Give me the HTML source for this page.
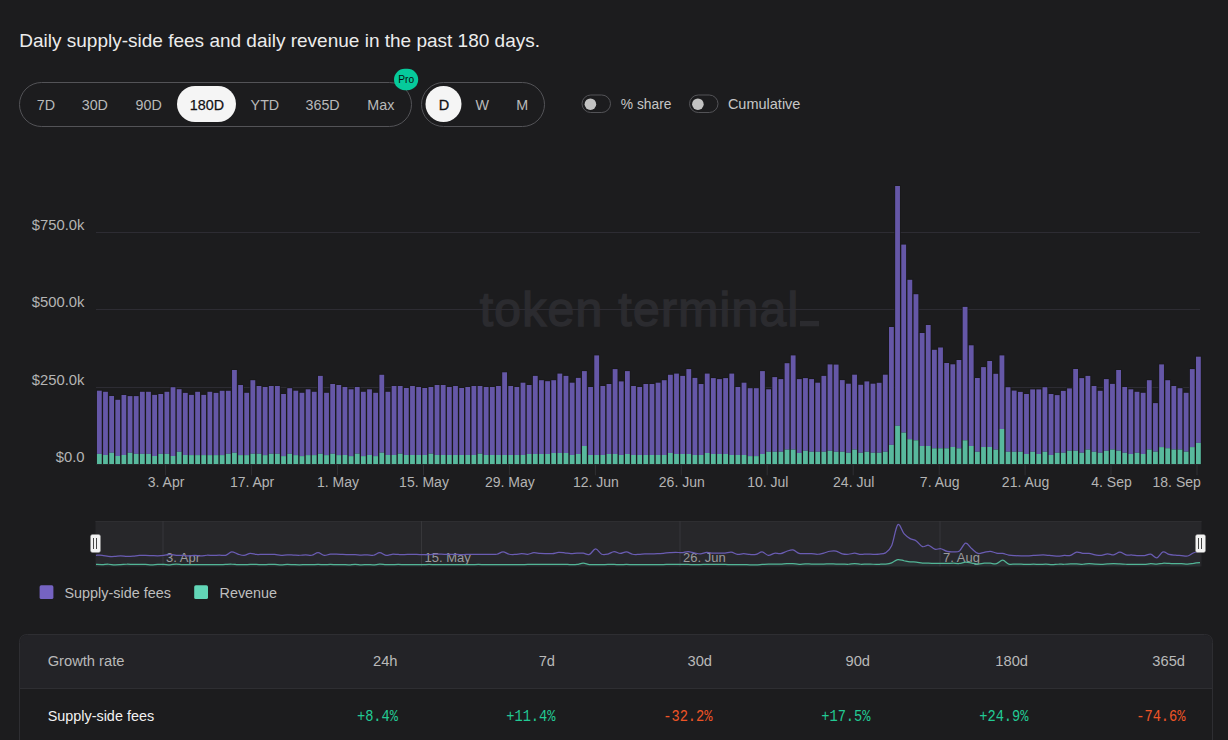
<!DOCTYPE html>
<html><head><meta charset="utf-8"><title>chart</title>
<style>html,body{margin:0;padding:0;background:#1c1c1e;width:1228px;height:740px;overflow:hidden}svg{display:block}</style>
</head><body>
<svg width="1228" height="740" viewBox="0 0 1228 740">
<rect width="1228" height="740" fill="#1c1c1e"/>
<text x="19.3" y="47" font-size="19" fill="#ececec" text-anchor="start" font-weight="normal" font-family='"Liberation Sans", sans-serif' >Daily supply-side fees and daily revenue in the past 180 days.</text>
<rect x="19.5" y="82.5" width="392" height="44" rx="22" fill="none" stroke="#535357"/>
<rect x="177" y="86" width="59" height="36" rx="18" fill="#f5f5f5"/>
<text x="36.7" y="110" font-size="14.3" fill="#b9b9b9" text-anchor="start" font-weight="normal" font-family='"Liberation Sans", sans-serif' >7D</text>
<text x="81.7" y="110" font-size="14.3" fill="#b9b9b9" text-anchor="start" font-weight="normal" font-family='"Liberation Sans", sans-serif' >30D</text>
<text x="135.6" y="110" font-size="14.3" fill="#b9b9b9" text-anchor="start" font-weight="normal" font-family='"Liberation Sans", sans-serif' >90D</text>
<text x="250.6" y="110" font-size="14.3" fill="#b9b9b9" text-anchor="start" font-weight="normal" font-family='"Liberation Sans", sans-serif' >YTD</text>
<text x="305.5" y="110" font-size="14.3" fill="#b9b9b9" text-anchor="start" font-weight="normal" font-family='"Liberation Sans", sans-serif' >365D</text>
<text x="367.3" y="110" font-size="14.3" fill="#b9b9b9" text-anchor="start" font-weight="normal" font-family='"Liberation Sans", sans-serif' >Max</text>
<text x="189.8" y="110" font-size="14.3" fill="#111113" text-anchor="start" font-weight="normal" font-family='"Liberation Sans", sans-serif' stroke="#111113" stroke-width="0.25">180D</text>
<rect x="394" y="68.8" width="24.2" height="21.4" rx="10.7" fill="#06ca9b"/>
<text x="406.2" y="83.1" font-size="10.2" fill="#07120e" text-anchor="middle" font-weight="normal" font-family='"Liberation Sans", sans-serif' >Pro</text>
<rect x="421.5" y="82.5" width="123" height="44" rx="22" fill="none" stroke="#535357"/>
<circle cx="443.5" cy="104" r="18" fill="#f5f5f5"/>
<text x="443.9" y="110" font-size="14.5" fill="#111113" text-anchor="middle" font-weight="normal" font-family='"Liberation Sans", sans-serif' stroke="#111113" stroke-width="0.3">D</text>
<text x="482.3" y="110" font-size="14.3" fill="#b9b9b9" text-anchor="middle" font-weight="normal" font-family='"Liberation Sans", sans-serif' >W</text>
<text x="522.1" y="110" font-size="14.3" fill="#b9b9b9" text-anchor="middle" font-weight="normal" font-family='"Liberation Sans", sans-serif' >M</text>
<rect x="582" y="95" width="28.5" height="17.5" rx="8.75" fill="none" stroke="#535357"/>
<circle cx="590.4" cy="104.2" r="5.8" fill="#c2c2c2"/>
<text x="620.8" y="109" font-size="13.8" fill="#c6c6c6" text-anchor="start" font-weight="normal" font-family='"Liberation Sans", sans-serif' >% share</text>
<rect x="689.5" y="95" width="28.5" height="17.5" rx="8.75" fill="none" stroke="#535357"/>
<circle cx="697.9" cy="104.2" r="5.8" fill="#c2c2c2"/>
<text x="727.9" y="109" font-size="14.5" fill="#c6c6c6" text-anchor="start" font-weight="normal" font-family='"Liberation Sans", sans-serif' >Cumulative</text>
<text x="479.7" y="325.6" font-size="48" fill="#2b2b2f" text-anchor="start" font-weight="normal" font-family='"Liberation Sans", sans-serif' stroke="#2b2b2f" stroke-width="1.5" letter-spacing="1.3">token terminal</text>
<rect x="800" y="321" width="19" height="5.3" fill="#2b2b2f"/>
<line x1="96" y1="232.5" x2="1200" y2="232.5" stroke="#2d2c33" stroke-width="1"/>
<line x1="96" y1="309.5" x2="1200" y2="309.5" stroke="#2d2c33" stroke-width="1"/>
<line x1="96" y1="387.5" x2="1200" y2="387.5" stroke="#2d2c33" stroke-width="1"/>
<text x="84.5" y="230" font-size="14.8" fill="#b4b4b4" text-anchor="end" font-weight="normal" font-family='"Liberation Sans", sans-serif' >$750.0k</text>
<text x="84.5" y="307" font-size="14.8" fill="#b4b4b4" text-anchor="end" font-weight="normal" font-family='"Liberation Sans", sans-serif' >$500.0k</text>
<text x="84.5" y="384.9" font-size="14.8" fill="#b4b4b4" text-anchor="end" font-weight="normal" font-family='"Liberation Sans", sans-serif' >$250.0k</text>
<text x="84.5" y="461.8" font-size="14.8" fill="#b4b4b4" text-anchor="end" font-weight="normal" font-family='"Liberation Sans", sans-serif' >$0.0</text>
<rect x="96.15" y="389.7" width="6.40" height="74.4" fill="#19191b"/>
<rect x="96.95" y="390.7" width="4.8" height="63.2" fill="#6557a7"/>
<rect x="96.95" y="453.9" width="4.8" height="10.2" fill="#58b99d"/>
<rect x="102.29" y="390.8" width="6.40" height="73.3" fill="#19191b"/>
<rect x="103.09" y="391.8" width="4.8" height="63.2" fill="#6557a7"/>
<rect x="103.09" y="455.0" width="4.8" height="9.1" fill="#58b99d"/>
<rect x="108.43" y="395.0" width="6.40" height="69.1" fill="#19191b"/>
<rect x="109.23" y="396.0" width="4.8" height="56.8" fill="#6557a7"/>
<rect x="109.23" y="452.8" width="4.8" height="11.3" fill="#58b99d"/>
<rect x="114.57" y="398.8" width="6.40" height="65.3" fill="#19191b"/>
<rect x="115.37" y="399.8" width="4.8" height="56.2" fill="#6557a7"/>
<rect x="115.37" y="456.0" width="4.8" height="8.1" fill="#58b99d"/>
<rect x="120.71" y="394.0" width="6.40" height="70.1" fill="#19191b"/>
<rect x="121.51" y="395.0" width="4.8" height="60.0" fill="#6557a7"/>
<rect x="121.51" y="455.0" width="4.8" height="9.1" fill="#58b99d"/>
<rect x="126.85" y="395.1" width="6.40" height="69.0" fill="#19191b"/>
<rect x="127.65" y="396.1" width="4.8" height="56.7" fill="#6557a7"/>
<rect x="127.65" y="452.8" width="4.8" height="11.3" fill="#58b99d"/>
<rect x="132.99" y="395.1" width="6.40" height="69.0" fill="#19191b"/>
<rect x="133.79" y="396.1" width="4.8" height="57.8" fill="#6557a7"/>
<rect x="133.79" y="453.9" width="4.8" height="10.2" fill="#58b99d"/>
<rect x="139.13" y="390.8" width="6.40" height="73.3" fill="#19191b"/>
<rect x="139.93" y="391.8" width="4.8" height="62.1" fill="#6557a7"/>
<rect x="139.93" y="453.9" width="4.8" height="10.2" fill="#58b99d"/>
<rect x="145.27" y="390.8" width="6.40" height="73.3" fill="#19191b"/>
<rect x="146.07" y="391.8" width="4.8" height="62.1" fill="#6557a7"/>
<rect x="146.07" y="453.9" width="4.8" height="10.2" fill="#58b99d"/>
<rect x="151.41" y="393.9" width="6.40" height="70.2" fill="#19191b"/>
<rect x="152.21" y="394.9" width="4.8" height="61.1" fill="#6557a7"/>
<rect x="152.21" y="456.0" width="4.8" height="8.1" fill="#58b99d"/>
<rect x="157.55" y="393.0" width="6.40" height="71.1" fill="#19191b"/>
<rect x="158.35" y="394.0" width="4.8" height="59.9" fill="#6557a7"/>
<rect x="158.35" y="453.9" width="4.8" height="10.2" fill="#58b99d"/>
<rect x="163.69" y="390.8" width="6.40" height="73.3" fill="#19191b"/>
<rect x="164.49" y="391.8" width="4.8" height="62.1" fill="#6557a7"/>
<rect x="164.49" y="453.9" width="4.8" height="10.2" fill="#58b99d"/>
<rect x="169.83" y="386.2" width="6.40" height="77.9" fill="#19191b"/>
<rect x="170.63" y="387.2" width="4.8" height="68.8" fill="#6557a7"/>
<rect x="170.63" y="456.0" width="4.8" height="8.1" fill="#58b99d"/>
<rect x="175.97" y="388.2" width="6.40" height="75.9" fill="#19191b"/>
<rect x="176.77" y="389.2" width="4.8" height="62.6" fill="#6557a7"/>
<rect x="176.77" y="451.8" width="4.8" height="12.3" fill="#58b99d"/>
<rect x="182.11" y="391.9" width="6.40" height="72.2" fill="#19191b"/>
<rect x="182.91" y="392.9" width="4.8" height="62.1" fill="#6557a7"/>
<rect x="182.91" y="455.0" width="4.8" height="9.1" fill="#58b99d"/>
<rect x="188.25" y="393.9" width="6.40" height="70.2" fill="#19191b"/>
<rect x="189.05" y="394.9" width="4.8" height="60.2" fill="#6557a7"/>
<rect x="189.05" y="455.1" width="4.8" height="9.0" fill="#58b99d"/>
<rect x="194.39" y="390.8" width="6.40" height="73.3" fill="#19191b"/>
<rect x="195.19" y="391.8" width="4.8" height="63.3" fill="#6557a7"/>
<rect x="195.19" y="455.1" width="4.8" height="9.0" fill="#58b99d"/>
<rect x="200.53" y="393.9" width="6.40" height="70.2" fill="#19191b"/>
<rect x="201.33" y="394.9" width="4.8" height="60.2" fill="#6557a7"/>
<rect x="201.33" y="455.1" width="4.8" height="9.0" fill="#58b99d"/>
<rect x="206.67" y="390.8" width="6.40" height="73.3" fill="#19191b"/>
<rect x="207.47" y="391.8" width="4.8" height="63.3" fill="#6557a7"/>
<rect x="207.47" y="455.1" width="4.8" height="9.0" fill="#58b99d"/>
<rect x="212.81" y="391.9" width="6.40" height="72.2" fill="#19191b"/>
<rect x="213.61" y="392.9" width="4.8" height="62.2" fill="#6557a7"/>
<rect x="213.61" y="455.1" width="4.8" height="9.0" fill="#58b99d"/>
<rect x="218.95" y="389.8" width="6.40" height="74.3" fill="#19191b"/>
<rect x="219.75" y="390.8" width="4.8" height="64.3" fill="#6557a7"/>
<rect x="219.75" y="455.1" width="4.8" height="9.0" fill="#58b99d"/>
<rect x="225.09" y="389.8" width="6.40" height="74.3" fill="#19191b"/>
<rect x="225.89" y="390.8" width="4.8" height="63.0" fill="#6557a7"/>
<rect x="225.89" y="453.8" width="4.8" height="10.3" fill="#58b99d"/>
<rect x="231.23" y="369.0" width="6.40" height="95.1" fill="#19191b"/>
<rect x="232.03" y="370.0" width="4.8" height="82.8" fill="#6557a7"/>
<rect x="232.03" y="452.8" width="4.8" height="11.3" fill="#58b99d"/>
<rect x="237.37" y="384.0" width="6.40" height="80.1" fill="#19191b"/>
<rect x="238.17" y="385.0" width="4.8" height="70.1" fill="#6557a7"/>
<rect x="238.17" y="455.1" width="4.8" height="9.0" fill="#58b99d"/>
<rect x="243.51" y="391.8" width="6.40" height="72.3" fill="#19191b"/>
<rect x="244.31" y="392.8" width="4.8" height="62.3" fill="#6557a7"/>
<rect x="244.31" y="455.1" width="4.8" height="9.0" fill="#58b99d"/>
<rect x="249.65" y="379.2" width="6.40" height="84.9" fill="#19191b"/>
<rect x="250.45" y="380.2" width="4.8" height="73.6" fill="#6557a7"/>
<rect x="250.45" y="453.8" width="4.8" height="10.3" fill="#58b99d"/>
<rect x="255.79" y="385.0" width="6.40" height="79.1" fill="#19191b"/>
<rect x="256.59" y="386.0" width="4.8" height="67.8" fill="#6557a7"/>
<rect x="256.59" y="453.8" width="4.8" height="10.3" fill="#58b99d"/>
<rect x="261.93" y="386.0" width="6.40" height="78.1" fill="#19191b"/>
<rect x="262.73" y="387.0" width="4.8" height="68.1" fill="#6557a7"/>
<rect x="262.73" y="455.1" width="4.8" height="9.0" fill="#58b99d"/>
<rect x="268.07" y="385.0" width="6.40" height="79.1" fill="#19191b"/>
<rect x="268.87" y="386.0" width="4.8" height="67.8" fill="#6557a7"/>
<rect x="268.87" y="453.8" width="4.8" height="10.3" fill="#58b99d"/>
<rect x="274.21" y="385.0" width="6.40" height="79.1" fill="#19191b"/>
<rect x="275.01" y="386.0" width="4.8" height="67.8" fill="#6557a7"/>
<rect x="275.01" y="453.8" width="4.8" height="10.3" fill="#58b99d"/>
<rect x="280.35" y="393.0" width="6.40" height="71.1" fill="#19191b"/>
<rect x="281.15" y="394.0" width="4.8" height="62.1" fill="#6557a7"/>
<rect x="281.15" y="456.1" width="4.8" height="8.0" fill="#58b99d"/>
<rect x="286.49" y="387.2" width="6.40" height="76.9" fill="#19191b"/>
<rect x="287.29" y="388.2" width="4.8" height="65.6" fill="#6557a7"/>
<rect x="287.29" y="453.8" width="4.8" height="10.3" fill="#58b99d"/>
<rect x="292.63" y="389.7" width="6.40" height="74.4" fill="#19191b"/>
<rect x="293.43" y="390.7" width="4.8" height="64.4" fill="#6557a7"/>
<rect x="293.43" y="455.1" width="4.8" height="9.0" fill="#58b99d"/>
<rect x="298.77" y="391.8" width="6.40" height="72.3" fill="#19191b"/>
<rect x="299.57" y="392.8" width="4.8" height="63.3" fill="#6557a7"/>
<rect x="299.57" y="456.1" width="4.8" height="8.0" fill="#58b99d"/>
<rect x="304.91" y="388.3" width="6.40" height="75.8" fill="#19191b"/>
<rect x="305.71" y="389.3" width="4.8" height="65.8" fill="#6557a7"/>
<rect x="305.71" y="455.1" width="4.8" height="9.0" fill="#58b99d"/>
<rect x="311.05" y="390.8" width="6.40" height="73.3" fill="#19191b"/>
<rect x="311.85" y="391.8" width="4.8" height="63.3" fill="#6557a7"/>
<rect x="311.85" y="455.1" width="4.8" height="9.0" fill="#58b99d"/>
<rect x="317.19" y="374.9" width="6.40" height="89.2" fill="#19191b"/>
<rect x="317.99" y="375.9" width="4.8" height="77.9" fill="#6557a7"/>
<rect x="317.99" y="453.8" width="4.8" height="10.3" fill="#58b99d"/>
<rect x="323.33" y="391.8" width="6.40" height="72.3" fill="#19191b"/>
<rect x="324.13" y="392.8" width="4.8" height="62.3" fill="#6557a7"/>
<rect x="324.13" y="455.1" width="4.8" height="9.0" fill="#58b99d"/>
<rect x="329.47" y="383.0" width="6.40" height="81.1" fill="#19191b"/>
<rect x="330.27" y="384.0" width="4.8" height="69.8" fill="#6557a7"/>
<rect x="330.27" y="453.8" width="4.8" height="10.3" fill="#58b99d"/>
<rect x="335.61" y="384.0" width="6.40" height="80.1" fill="#19191b"/>
<rect x="336.41" y="385.0" width="4.8" height="70.1" fill="#6557a7"/>
<rect x="336.41" y="455.1" width="4.8" height="9.0" fill="#58b99d"/>
<rect x="341.75" y="386.0" width="6.40" height="78.1" fill="#19191b"/>
<rect x="342.55" y="387.0" width="4.8" height="68.0" fill="#6557a7"/>
<rect x="342.55" y="455.0" width="4.8" height="9.1" fill="#58b99d"/>
<rect x="347.89" y="388.3" width="6.40" height="75.8" fill="#19191b"/>
<rect x="348.69" y="389.3" width="4.8" height="66.8" fill="#6557a7"/>
<rect x="348.69" y="456.1" width="4.8" height="8.0" fill="#58b99d"/>
<rect x="354.03" y="386.0" width="6.40" height="78.1" fill="#19191b"/>
<rect x="354.83" y="387.0" width="4.8" height="66.7" fill="#6557a7"/>
<rect x="354.83" y="453.7" width="4.8" height="10.4" fill="#58b99d"/>
<rect x="360.17" y="390.8" width="6.40" height="73.3" fill="#19191b"/>
<rect x="360.97" y="391.8" width="4.8" height="64.3" fill="#6557a7"/>
<rect x="360.97" y="456.1" width="4.8" height="8.0" fill="#58b99d"/>
<rect x="366.31" y="388.3" width="6.40" height="75.8" fill="#19191b"/>
<rect x="367.11" y="389.3" width="4.8" height="65.7" fill="#6557a7"/>
<rect x="367.11" y="455.0" width="4.8" height="9.1" fill="#58b99d"/>
<rect x="372.45" y="391.8" width="6.40" height="72.3" fill="#19191b"/>
<rect x="373.25" y="392.8" width="4.8" height="63.3" fill="#6557a7"/>
<rect x="373.25" y="456.1" width="4.8" height="8.0" fill="#58b99d"/>
<rect x="378.59" y="373.8" width="6.40" height="90.3" fill="#19191b"/>
<rect x="379.39" y="374.8" width="4.8" height="77.9" fill="#6557a7"/>
<rect x="379.39" y="452.7" width="4.8" height="11.4" fill="#58b99d"/>
<rect x="384.73" y="390.8" width="6.40" height="73.3" fill="#19191b"/>
<rect x="385.53" y="391.8" width="4.8" height="63.2" fill="#6557a7"/>
<rect x="385.53" y="455.0" width="4.8" height="9.1" fill="#58b99d"/>
<rect x="390.87" y="385.0" width="6.40" height="79.1" fill="#19191b"/>
<rect x="391.67" y="386.0" width="4.8" height="69.0" fill="#6557a7"/>
<rect x="391.67" y="455.0" width="4.8" height="9.1" fill="#58b99d"/>
<rect x="397.01" y="385.0" width="6.40" height="79.1" fill="#19191b"/>
<rect x="397.81" y="386.0" width="4.8" height="67.7" fill="#6557a7"/>
<rect x="397.81" y="453.7" width="4.8" height="10.4" fill="#58b99d"/>
<rect x="403.15" y="387.0" width="6.40" height="77.1" fill="#19191b"/>
<rect x="403.95" y="388.0" width="4.8" height="67.0" fill="#6557a7"/>
<rect x="403.95" y="455.0" width="4.8" height="9.1" fill="#58b99d"/>
<rect x="409.29" y="385.0" width="6.40" height="79.1" fill="#19191b"/>
<rect x="410.09" y="386.0" width="4.8" height="69.0" fill="#6557a7"/>
<rect x="410.09" y="455.0" width="4.8" height="9.1" fill="#58b99d"/>
<rect x="415.43" y="386.0" width="6.40" height="78.1" fill="#19191b"/>
<rect x="416.23" y="387.0" width="4.8" height="68.0" fill="#6557a7"/>
<rect x="416.23" y="455.0" width="4.8" height="9.1" fill="#58b99d"/>
<rect x="421.57" y="387.0" width="6.40" height="77.1" fill="#19191b"/>
<rect x="422.37" y="388.0" width="4.8" height="67.0" fill="#6557a7"/>
<rect x="422.37" y="455.0" width="4.8" height="9.1" fill="#58b99d"/>
<rect x="427.71" y="386.0" width="6.40" height="78.1" fill="#19191b"/>
<rect x="428.51" y="387.0" width="4.8" height="66.7" fill="#6557a7"/>
<rect x="428.51" y="453.7" width="4.8" height="10.4" fill="#58b99d"/>
<rect x="433.85" y="384.0" width="6.40" height="80.1" fill="#19191b"/>
<rect x="434.65" y="385.0" width="4.8" height="70.0" fill="#6557a7"/>
<rect x="434.65" y="455.0" width="4.8" height="9.1" fill="#58b99d"/>
<rect x="439.99" y="384.0" width="6.40" height="80.1" fill="#19191b"/>
<rect x="440.79" y="385.0" width="4.8" height="70.0" fill="#6557a7"/>
<rect x="440.79" y="455.0" width="4.8" height="9.1" fill="#58b99d"/>
<rect x="446.13" y="386.0" width="6.40" height="78.1" fill="#19191b"/>
<rect x="446.93" y="387.0" width="4.8" height="68.0" fill="#6557a7"/>
<rect x="446.93" y="455.0" width="4.8" height="9.1" fill="#58b99d"/>
<rect x="452.27" y="385.0" width="6.40" height="79.1" fill="#19191b"/>
<rect x="453.07" y="386.0" width="4.8" height="69.0" fill="#6557a7"/>
<rect x="453.07" y="455.0" width="4.8" height="9.1" fill="#58b99d"/>
<rect x="458.41" y="387.0" width="6.40" height="77.1" fill="#19191b"/>
<rect x="459.21" y="388.0" width="4.8" height="67.0" fill="#6557a7"/>
<rect x="459.21" y="455.0" width="4.8" height="9.1" fill="#58b99d"/>
<rect x="464.55" y="386.0" width="6.40" height="78.1" fill="#19191b"/>
<rect x="465.35" y="387.0" width="4.8" height="68.0" fill="#6557a7"/>
<rect x="465.35" y="455.0" width="4.8" height="9.1" fill="#58b99d"/>
<rect x="470.69" y="385.0" width="6.40" height="79.1" fill="#19191b"/>
<rect x="471.49" y="386.0" width="4.8" height="69.0" fill="#6557a7"/>
<rect x="471.49" y="455.0" width="4.8" height="9.1" fill="#58b99d"/>
<rect x="476.83" y="385.0" width="6.40" height="79.1" fill="#19191b"/>
<rect x="477.63" y="386.0" width="4.8" height="67.7" fill="#6557a7"/>
<rect x="477.63" y="453.7" width="4.8" height="10.4" fill="#58b99d"/>
<rect x="482.97" y="386.0" width="6.40" height="78.1" fill="#19191b"/>
<rect x="483.77" y="387.0" width="4.8" height="68.0" fill="#6557a7"/>
<rect x="483.77" y="455.0" width="4.8" height="9.1" fill="#58b99d"/>
<rect x="489.11" y="386.0" width="6.40" height="78.1" fill="#19191b"/>
<rect x="489.91" y="387.0" width="4.8" height="68.0" fill="#6557a7"/>
<rect x="489.91" y="455.0" width="4.8" height="9.1" fill="#58b99d"/>
<rect x="495.25" y="385.0" width="6.40" height="79.1" fill="#19191b"/>
<rect x="496.05" y="386.0" width="4.8" height="69.0" fill="#6557a7"/>
<rect x="496.05" y="455.0" width="4.8" height="9.1" fill="#58b99d"/>
<rect x="501.39" y="371.3" width="6.40" height="92.8" fill="#19191b"/>
<rect x="502.19" y="372.3" width="4.8" height="82.7" fill="#6557a7"/>
<rect x="502.19" y="455.0" width="4.8" height="9.1" fill="#58b99d"/>
<rect x="507.53" y="385.0" width="6.40" height="79.1" fill="#19191b"/>
<rect x="508.33" y="386.0" width="4.8" height="69.0" fill="#6557a7"/>
<rect x="508.33" y="455.0" width="4.8" height="9.1" fill="#58b99d"/>
<rect x="513.67" y="386.0" width="6.40" height="78.1" fill="#19191b"/>
<rect x="514.47" y="387.0" width="4.8" height="68.0" fill="#6557a7"/>
<rect x="514.47" y="455.0" width="4.8" height="9.1" fill="#58b99d"/>
<rect x="519.81" y="381.7" width="6.40" height="82.4" fill="#19191b"/>
<rect x="520.61" y="382.7" width="4.8" height="72.3" fill="#6557a7"/>
<rect x="520.61" y="455.0" width="4.8" height="9.1" fill="#58b99d"/>
<rect x="525.95" y="384.0" width="6.40" height="80.1" fill="#19191b"/>
<rect x="526.75" y="385.0" width="4.8" height="69.0" fill="#6557a7"/>
<rect x="526.75" y="454.0" width="4.8" height="10.1" fill="#58b99d"/>
<rect x="532.09" y="374.9" width="6.40" height="89.2" fill="#19191b"/>
<rect x="532.89" y="375.9" width="4.8" height="78.1" fill="#6557a7"/>
<rect x="532.89" y="454.0" width="4.8" height="10.1" fill="#58b99d"/>
<rect x="538.23" y="379.2" width="6.40" height="84.9" fill="#19191b"/>
<rect x="539.03" y="380.2" width="4.8" height="73.8" fill="#6557a7"/>
<rect x="539.03" y="454.0" width="4.8" height="10.1" fill="#58b99d"/>
<rect x="544.37" y="380.2" width="6.40" height="83.9" fill="#19191b"/>
<rect x="545.17" y="381.2" width="4.8" height="72.8" fill="#6557a7"/>
<rect x="545.17" y="454.0" width="4.8" height="10.1" fill="#58b99d"/>
<rect x="550.51" y="379.2" width="6.40" height="84.9" fill="#19191b"/>
<rect x="551.31" y="380.2" width="4.8" height="72.8" fill="#6557a7"/>
<rect x="551.31" y="453.0" width="4.8" height="11.1" fill="#58b99d"/>
<rect x="556.65" y="372.6" width="6.40" height="91.5" fill="#19191b"/>
<rect x="557.45" y="373.6" width="4.8" height="79.4" fill="#6557a7"/>
<rect x="557.45" y="453.0" width="4.8" height="11.1" fill="#58b99d"/>
<rect x="562.79" y="374.9" width="6.40" height="89.2" fill="#19191b"/>
<rect x="563.59" y="375.9" width="4.8" height="77.1" fill="#6557a7"/>
<rect x="563.59" y="453.0" width="4.8" height="11.1" fill="#58b99d"/>
<rect x="568.93" y="381.7" width="6.40" height="82.4" fill="#19191b"/>
<rect x="569.73" y="382.7" width="4.8" height="72.3" fill="#6557a7"/>
<rect x="569.73" y="455.0" width="4.8" height="9.1" fill="#58b99d"/>
<rect x="575.07" y="376.9" width="6.40" height="87.2" fill="#19191b"/>
<rect x="575.87" y="377.9" width="4.8" height="76.1" fill="#6557a7"/>
<rect x="575.87" y="454.0" width="4.8" height="10.1" fill="#58b99d"/>
<rect x="581.21" y="370.1" width="6.40" height="94.0" fill="#19191b"/>
<rect x="582.01" y="371.1" width="4.8" height="74.9" fill="#6557a7"/>
<rect x="582.01" y="446.0" width="4.8" height="18.1" fill="#58b99d"/>
<rect x="587.35" y="386.0" width="6.40" height="78.1" fill="#19191b"/>
<rect x="588.15" y="387.0" width="4.8" height="68.0" fill="#6557a7"/>
<rect x="588.15" y="455.0" width="4.8" height="9.1" fill="#58b99d"/>
<rect x="593.49" y="354.4" width="6.40" height="109.7" fill="#19191b"/>
<rect x="594.29" y="355.4" width="4.8" height="99.6" fill="#6557a7"/>
<rect x="594.29" y="455.0" width="4.8" height="9.1" fill="#58b99d"/>
<rect x="599.63" y="385.0" width="6.40" height="79.1" fill="#19191b"/>
<rect x="600.43" y="386.0" width="4.8" height="69.0" fill="#6557a7"/>
<rect x="600.43" y="455.0" width="4.8" height="9.1" fill="#58b99d"/>
<rect x="605.77" y="383.0" width="6.40" height="81.1" fill="#19191b"/>
<rect x="606.57" y="384.0" width="4.8" height="70.0" fill="#6557a7"/>
<rect x="606.57" y="454.0" width="4.8" height="10.1" fill="#58b99d"/>
<rect x="611.91" y="368.1" width="6.40" height="96.0" fill="#19191b"/>
<rect x="612.71" y="369.1" width="4.8" height="84.9" fill="#6557a7"/>
<rect x="612.71" y="454.0" width="4.8" height="10.1" fill="#58b99d"/>
<rect x="618.05" y="380.4" width="6.40" height="83.7" fill="#19191b"/>
<rect x="618.85" y="381.4" width="4.8" height="73.6" fill="#6557a7"/>
<rect x="618.85" y="455.0" width="4.8" height="9.1" fill="#58b99d"/>
<rect x="624.19" y="370.1" width="6.40" height="94.0" fill="#19191b"/>
<rect x="624.99" y="371.1" width="4.8" height="82.9" fill="#6557a7"/>
<rect x="624.99" y="454.0" width="4.8" height="10.1" fill="#58b99d"/>
<rect x="630.33" y="385.0" width="6.40" height="79.1" fill="#19191b"/>
<rect x="631.13" y="386.0" width="4.8" height="69.0" fill="#6557a7"/>
<rect x="631.13" y="455.0" width="4.8" height="9.1" fill="#58b99d"/>
<rect x="636.47" y="386.0" width="6.40" height="78.1" fill="#19191b"/>
<rect x="637.27" y="387.0" width="4.8" height="68.0" fill="#6557a7"/>
<rect x="637.27" y="455.0" width="4.8" height="9.1" fill="#58b99d"/>
<rect x="642.61" y="383.0" width="6.40" height="81.1" fill="#19191b"/>
<rect x="643.41" y="384.0" width="4.8" height="71.0" fill="#6557a7"/>
<rect x="643.41" y="455.0" width="4.8" height="9.1" fill="#58b99d"/>
<rect x="648.75" y="383.0" width="6.40" height="81.1" fill="#19191b"/>
<rect x="649.55" y="384.0" width="4.8" height="71.0" fill="#6557a7"/>
<rect x="649.55" y="455.0" width="4.8" height="9.1" fill="#58b99d"/>
<rect x="654.89" y="381.7" width="6.40" height="82.4" fill="#19191b"/>
<rect x="655.69" y="382.7" width="4.8" height="72.3" fill="#6557a7"/>
<rect x="655.69" y="455.0" width="4.8" height="9.1" fill="#58b99d"/>
<rect x="661.03" y="379.2" width="6.40" height="84.9" fill="#19191b"/>
<rect x="661.83" y="380.2" width="4.8" height="74.8" fill="#6557a7"/>
<rect x="661.83" y="455.0" width="4.8" height="9.1" fill="#58b99d"/>
<rect x="667.17" y="373.8" width="6.40" height="90.3" fill="#19191b"/>
<rect x="667.97" y="374.8" width="4.8" height="78.2" fill="#6557a7"/>
<rect x="667.97" y="453.0" width="4.8" height="11.1" fill="#58b99d"/>
<rect x="673.31" y="372.6" width="6.40" height="91.5" fill="#19191b"/>
<rect x="674.11" y="373.6" width="4.8" height="80.4" fill="#6557a7"/>
<rect x="674.11" y="454.0" width="4.8" height="10.1" fill="#58b99d"/>
<rect x="679.45" y="374.9" width="6.40" height="89.2" fill="#19191b"/>
<rect x="680.25" y="375.9" width="4.8" height="78.1" fill="#6557a7"/>
<rect x="680.25" y="454.0" width="4.8" height="10.1" fill="#58b99d"/>
<rect x="685.59" y="368.1" width="6.40" height="96.0" fill="#19191b"/>
<rect x="686.39" y="369.1" width="4.8" height="84.9" fill="#6557a7"/>
<rect x="686.39" y="454.0" width="4.8" height="10.1" fill="#58b99d"/>
<rect x="691.73" y="376.9" width="6.40" height="87.2" fill="#19191b"/>
<rect x="692.53" y="377.9" width="4.8" height="77.1" fill="#6557a7"/>
<rect x="692.53" y="455.0" width="4.8" height="9.1" fill="#58b99d"/>
<rect x="697.87" y="383.0" width="6.40" height="81.1" fill="#19191b"/>
<rect x="698.67" y="384.0" width="4.8" height="71.0" fill="#6557a7"/>
<rect x="698.67" y="455.0" width="4.8" height="9.1" fill="#58b99d"/>
<rect x="704.01" y="372.6" width="6.40" height="91.5" fill="#19191b"/>
<rect x="704.81" y="373.6" width="4.8" height="79.4" fill="#6557a7"/>
<rect x="704.81" y="453.0" width="4.8" height="11.1" fill="#58b99d"/>
<rect x="710.15" y="377.1" width="6.40" height="87.0" fill="#19191b"/>
<rect x="710.95" y="378.1" width="4.8" height="75.9" fill="#6557a7"/>
<rect x="710.95" y="454.0" width="4.8" height="10.1" fill="#58b99d"/>
<rect x="716.29" y="378.1" width="6.40" height="86.0" fill="#19191b"/>
<rect x="717.09" y="379.1" width="4.8" height="74.9" fill="#6557a7"/>
<rect x="717.09" y="454.0" width="4.8" height="10.1" fill="#58b99d"/>
<rect x="722.43" y="377.1" width="6.40" height="87.0" fill="#19191b"/>
<rect x="723.23" y="378.1" width="4.8" height="75.9" fill="#6557a7"/>
<rect x="723.23" y="454.0" width="4.8" height="10.1" fill="#58b99d"/>
<rect x="728.57" y="372.6" width="6.40" height="91.5" fill="#19191b"/>
<rect x="729.37" y="373.6" width="4.8" height="81.4" fill="#6557a7"/>
<rect x="729.37" y="455.0" width="4.8" height="9.1" fill="#58b99d"/>
<rect x="734.71" y="386.0" width="6.40" height="78.1" fill="#19191b"/>
<rect x="735.51" y="387.0" width="4.8" height="68.0" fill="#6557a7"/>
<rect x="735.51" y="455.0" width="4.8" height="9.1" fill="#58b99d"/>
<rect x="740.85" y="381.7" width="6.40" height="82.4" fill="#19191b"/>
<rect x="741.65" y="382.7" width="4.8" height="72.3" fill="#6557a7"/>
<rect x="741.65" y="455.0" width="4.8" height="9.1" fill="#58b99d"/>
<rect x="746.99" y="387.2" width="6.40" height="76.9" fill="#19191b"/>
<rect x="747.79" y="388.2" width="4.8" height="67.9" fill="#6557a7"/>
<rect x="747.79" y="456.1" width="4.8" height="8.0" fill="#58b99d"/>
<rect x="753.13" y="387.2" width="6.40" height="76.9" fill="#19191b"/>
<rect x="753.93" y="388.2" width="4.8" height="67.9" fill="#6557a7"/>
<rect x="753.93" y="456.1" width="4.8" height="8.0" fill="#58b99d"/>
<rect x="759.27" y="370.1" width="6.40" height="94.0" fill="#19191b"/>
<rect x="760.07" y="371.1" width="4.8" height="82.9" fill="#6557a7"/>
<rect x="760.07" y="454.0" width="4.8" height="10.1" fill="#58b99d"/>
<rect x="765.41" y="388.3" width="6.40" height="75.8" fill="#19191b"/>
<rect x="766.21" y="389.3" width="4.8" height="62.5" fill="#6557a7"/>
<rect x="766.21" y="451.8" width="4.8" height="12.3" fill="#58b99d"/>
<rect x="771.55" y="376.1" width="6.40" height="88.0" fill="#19191b"/>
<rect x="772.35" y="377.1" width="4.8" height="74.7" fill="#6557a7"/>
<rect x="772.35" y="451.8" width="4.8" height="12.3" fill="#58b99d"/>
<rect x="777.69" y="378.1" width="6.40" height="86.0" fill="#19191b"/>
<rect x="778.49" y="379.1" width="4.8" height="72.7" fill="#6557a7"/>
<rect x="778.49" y="451.8" width="4.8" height="12.3" fill="#58b99d"/>
<rect x="783.83" y="362.2" width="6.40" height="101.9" fill="#19191b"/>
<rect x="784.63" y="363.2" width="4.8" height="86.4" fill="#6557a7"/>
<rect x="784.63" y="449.6" width="4.8" height="14.5" fill="#58b99d"/>
<rect x="789.97" y="354.4" width="6.40" height="109.7" fill="#19191b"/>
<rect x="790.77" y="355.4" width="4.8" height="94.2" fill="#6557a7"/>
<rect x="790.77" y="449.6" width="4.8" height="14.5" fill="#58b99d"/>
<rect x="796.11" y="378.1" width="6.40" height="86.0" fill="#19191b"/>
<rect x="796.91" y="379.1" width="4.8" height="73.9" fill="#6557a7"/>
<rect x="796.91" y="453.0" width="4.8" height="11.1" fill="#58b99d"/>
<rect x="802.25" y="377.1" width="6.40" height="87.0" fill="#19191b"/>
<rect x="803.05" y="378.1" width="4.8" height="72.7" fill="#6557a7"/>
<rect x="803.05" y="450.8" width="4.8" height="13.3" fill="#58b99d"/>
<rect x="808.39" y="378.1" width="6.40" height="86.0" fill="#19191b"/>
<rect x="809.19" y="379.1" width="4.8" height="72.7" fill="#6557a7"/>
<rect x="809.19" y="451.8" width="4.8" height="12.3" fill="#58b99d"/>
<rect x="814.53" y="381.7" width="6.40" height="82.4" fill="#19191b"/>
<rect x="815.33" y="382.7" width="4.8" height="69.1" fill="#6557a7"/>
<rect x="815.33" y="451.8" width="4.8" height="12.3" fill="#58b99d"/>
<rect x="820.67" y="374.9" width="6.40" height="89.2" fill="#19191b"/>
<rect x="821.47" y="375.9" width="4.8" height="75.9" fill="#6557a7"/>
<rect x="821.47" y="451.8" width="4.8" height="12.3" fill="#58b99d"/>
<rect x="826.81" y="363.4" width="6.40" height="100.7" fill="#19191b"/>
<rect x="827.61" y="364.4" width="4.8" height="86.4" fill="#6557a7"/>
<rect x="827.61" y="450.8" width="4.8" height="13.3" fill="#58b99d"/>
<rect x="832.95" y="363.6" width="6.40" height="100.5" fill="#19191b"/>
<rect x="833.75" y="364.6" width="4.8" height="87.2" fill="#6557a7"/>
<rect x="833.75" y="451.8" width="4.8" height="12.3" fill="#58b99d"/>
<rect x="839.09" y="379.1" width="6.40" height="85.0" fill="#19191b"/>
<rect x="839.89" y="380.1" width="4.8" height="71.7" fill="#6557a7"/>
<rect x="839.89" y="451.8" width="4.8" height="12.3" fill="#58b99d"/>
<rect x="845.23" y="382.7" width="6.40" height="81.4" fill="#19191b"/>
<rect x="846.03" y="383.7" width="4.8" height="69.1" fill="#6557a7"/>
<rect x="846.03" y="452.8" width="4.8" height="11.3" fill="#58b99d"/>
<rect x="851.37" y="373.7" width="6.40" height="90.4" fill="#19191b"/>
<rect x="852.17" y="374.7" width="4.8" height="74.9" fill="#6557a7"/>
<rect x="852.17" y="449.6" width="4.8" height="14.5" fill="#58b99d"/>
<rect x="857.51" y="383.8" width="6.40" height="80.3" fill="#19191b"/>
<rect x="858.31" y="384.8" width="4.8" height="68.0" fill="#6557a7"/>
<rect x="858.31" y="452.8" width="4.8" height="11.3" fill="#58b99d"/>
<rect x="863.65" y="380.4" width="6.40" height="83.7" fill="#19191b"/>
<rect x="864.45" y="381.4" width="4.8" height="70.4" fill="#6557a7"/>
<rect x="864.45" y="451.8" width="4.8" height="12.3" fill="#58b99d"/>
<rect x="869.79" y="382.7" width="6.40" height="81.4" fill="#19191b"/>
<rect x="870.59" y="383.7" width="4.8" height="69.1" fill="#6557a7"/>
<rect x="870.59" y="452.8" width="4.8" height="11.3" fill="#58b99d"/>
<rect x="875.93" y="381.8" width="6.40" height="82.3" fill="#19191b"/>
<rect x="876.73" y="382.8" width="4.8" height="70.0" fill="#6557a7"/>
<rect x="876.73" y="452.8" width="4.8" height="11.3" fill="#58b99d"/>
<rect x="882.07" y="373.7" width="6.40" height="90.4" fill="#19191b"/>
<rect x="882.87" y="374.7" width="4.8" height="77.1" fill="#6557a7"/>
<rect x="882.87" y="451.8" width="4.8" height="12.3" fill="#58b99d"/>
<rect x="888.21" y="326.0" width="6.40" height="138.1" fill="#19191b"/>
<rect x="889.01" y="327.0" width="4.8" height="117.9" fill="#6557a7"/>
<rect x="889.01" y="444.9" width="4.8" height="19.2" fill="#58b99d"/>
<rect x="894.35" y="185.0" width="6.40" height="279.1" fill="#19191b"/>
<rect x="895.15" y="186.0" width="4.8" height="239.8" fill="#6557a7"/>
<rect x="895.15" y="425.8" width="4.8" height="38.3" fill="#58b99d"/>
<rect x="900.49" y="243.6" width="6.40" height="220.5" fill="#19191b"/>
<rect x="901.29" y="244.6" width="4.8" height="188.0" fill="#6557a7"/>
<rect x="901.29" y="432.6" width="4.8" height="31.5" fill="#58b99d"/>
<rect x="906.63" y="278.8" width="6.40" height="185.3" fill="#19191b"/>
<rect x="907.43" y="279.8" width="4.8" height="159.4" fill="#6557a7"/>
<rect x="907.43" y="439.2" width="4.8" height="24.9" fill="#58b99d"/>
<rect x="912.77" y="293.2" width="6.40" height="170.9" fill="#19191b"/>
<rect x="913.57" y="294.2" width="4.8" height="146.1" fill="#6557a7"/>
<rect x="913.57" y="440.3" width="4.8" height="23.8" fill="#58b99d"/>
<rect x="918.91" y="332.0" width="6.40" height="132.1" fill="#19191b"/>
<rect x="919.71" y="333.0" width="4.8" height="113.0" fill="#6557a7"/>
<rect x="919.71" y="446.0" width="4.8" height="18.1" fill="#58b99d"/>
<rect x="925.05" y="324.0" width="6.40" height="140.1" fill="#19191b"/>
<rect x="925.85" y="325.0" width="4.8" height="121.0" fill="#6557a7"/>
<rect x="925.85" y="446.0" width="4.8" height="18.1" fill="#58b99d"/>
<rect x="931.19" y="348.8" width="6.40" height="115.3" fill="#19191b"/>
<rect x="931.99" y="349.8" width="4.8" height="98.5" fill="#6557a7"/>
<rect x="931.99" y="448.3" width="4.8" height="15.8" fill="#58b99d"/>
<rect x="937.33" y="346.5" width="6.40" height="117.6" fill="#19191b"/>
<rect x="938.13" y="347.5" width="4.8" height="100.8" fill="#6557a7"/>
<rect x="938.13" y="448.3" width="4.8" height="15.8" fill="#58b99d"/>
<rect x="943.47" y="362.0" width="6.40" height="102.1" fill="#19191b"/>
<rect x="944.27" y="363.0" width="4.8" height="85.3" fill="#6557a7"/>
<rect x="944.27" y="448.3" width="4.8" height="15.8" fill="#58b99d"/>
<rect x="949.61" y="363.3" width="6.40" height="100.8" fill="#19191b"/>
<rect x="950.41" y="364.3" width="4.8" height="82.7" fill="#6557a7"/>
<rect x="950.41" y="447.0" width="4.8" height="17.1" fill="#58b99d"/>
<rect x="955.75" y="359.0" width="6.40" height="105.1" fill="#19191b"/>
<rect x="956.55" y="360.0" width="4.8" height="88.3" fill="#6557a7"/>
<rect x="956.55" y="448.3" width="4.8" height="15.8" fill="#58b99d"/>
<rect x="961.89" y="305.9" width="6.40" height="158.2" fill="#19191b"/>
<rect x="962.69" y="306.9" width="4.8" height="133.4" fill="#6557a7"/>
<rect x="962.69" y="440.3" width="4.8" height="23.8" fill="#58b99d"/>
<rect x="968.03" y="344.3" width="6.40" height="119.8" fill="#19191b"/>
<rect x="968.83" y="345.3" width="4.8" height="100.7" fill="#6557a7"/>
<rect x="968.83" y="446.0" width="4.8" height="18.1" fill="#58b99d"/>
<rect x="974.17" y="377.0" width="6.40" height="87.1" fill="#19191b"/>
<rect x="974.97" y="378.0" width="4.8" height="73.8" fill="#6557a7"/>
<rect x="974.97" y="451.8" width="4.8" height="12.3" fill="#58b99d"/>
<rect x="980.31" y="366.1" width="6.40" height="98.0" fill="#19191b"/>
<rect x="981.11" y="367.1" width="4.8" height="79.9" fill="#6557a7"/>
<rect x="981.11" y="447.0" width="4.8" height="17.1" fill="#58b99d"/>
<rect x="986.45" y="360.0" width="6.40" height="104.1" fill="#19191b"/>
<rect x="987.25" y="361.0" width="4.8" height="86.0" fill="#6557a7"/>
<rect x="987.25" y="447.0" width="4.8" height="17.1" fill="#58b99d"/>
<rect x="992.59" y="372.8" width="6.40" height="91.3" fill="#19191b"/>
<rect x="993.39" y="373.8" width="4.8" height="75.8" fill="#6557a7"/>
<rect x="993.39" y="449.6" width="4.8" height="14.5" fill="#58b99d"/>
<rect x="998.73" y="354.4" width="6.40" height="109.7" fill="#19191b"/>
<rect x="999.53" y="355.4" width="4.8" height="73.6" fill="#6557a7"/>
<rect x="999.53" y="429.0" width="4.8" height="35.1" fill="#58b99d"/>
<rect x="1004.87" y="386.2" width="6.40" height="77.9" fill="#19191b"/>
<rect x="1005.67" y="387.2" width="4.8" height="64.6" fill="#6557a7"/>
<rect x="1005.67" y="451.8" width="4.8" height="12.3" fill="#58b99d"/>
<rect x="1011.01" y="389.6" width="6.40" height="74.5" fill="#19191b"/>
<rect x="1011.81" y="390.6" width="4.8" height="61.2" fill="#6557a7"/>
<rect x="1011.81" y="451.8" width="4.8" height="12.3" fill="#58b99d"/>
<rect x="1017.15" y="390.9" width="6.40" height="73.2" fill="#19191b"/>
<rect x="1017.95" y="391.9" width="4.8" height="59.9" fill="#6557a7"/>
<rect x="1017.95" y="451.8" width="4.8" height="12.3" fill="#58b99d"/>
<rect x="1023.29" y="393.0" width="6.40" height="71.1" fill="#19191b"/>
<rect x="1024.09" y="394.0" width="4.8" height="60.0" fill="#6557a7"/>
<rect x="1024.09" y="454.0" width="4.8" height="10.1" fill="#58b99d"/>
<rect x="1029.43" y="388.4" width="6.40" height="75.7" fill="#19191b"/>
<rect x="1030.23" y="389.4" width="4.8" height="62.4" fill="#6557a7"/>
<rect x="1030.23" y="451.8" width="4.8" height="12.3" fill="#58b99d"/>
<rect x="1035.57" y="388.4" width="6.40" height="75.7" fill="#19191b"/>
<rect x="1036.37" y="389.4" width="4.8" height="64.6" fill="#6557a7"/>
<rect x="1036.37" y="454.0" width="4.8" height="10.1" fill="#58b99d"/>
<rect x="1041.71" y="386.2" width="6.40" height="77.9" fill="#19191b"/>
<rect x="1042.51" y="387.2" width="4.8" height="64.6" fill="#6557a7"/>
<rect x="1042.51" y="451.8" width="4.8" height="12.3" fill="#58b99d"/>
<rect x="1047.85" y="393.0" width="6.40" height="71.1" fill="#19191b"/>
<rect x="1048.65" y="394.0" width="4.8" height="61.0" fill="#6557a7"/>
<rect x="1048.65" y="455.0" width="4.8" height="9.1" fill="#58b99d"/>
<rect x="1053.99" y="394.1" width="6.40" height="70.0" fill="#19191b"/>
<rect x="1054.79" y="395.1" width="4.8" height="57.7" fill="#6557a7"/>
<rect x="1054.79" y="452.8" width="4.8" height="11.3" fill="#58b99d"/>
<rect x="1060.13" y="389.9" width="6.40" height="74.2" fill="#19191b"/>
<rect x="1060.93" y="390.9" width="4.8" height="61.9" fill="#6557a7"/>
<rect x="1060.93" y="452.8" width="4.8" height="11.3" fill="#58b99d"/>
<rect x="1066.27" y="387.4" width="6.40" height="76.7" fill="#19191b"/>
<rect x="1067.07" y="388.4" width="4.8" height="62.4" fill="#6557a7"/>
<rect x="1067.07" y="450.8" width="4.8" height="13.3" fill="#58b99d"/>
<rect x="1072.41" y="368.0" width="6.40" height="96.1" fill="#19191b"/>
<rect x="1073.21" y="369.0" width="4.8" height="81.8" fill="#6557a7"/>
<rect x="1073.21" y="450.8" width="4.8" height="13.3" fill="#58b99d"/>
<rect x="1078.55" y="377.1" width="6.40" height="87.0" fill="#19191b"/>
<rect x="1079.35" y="378.1" width="4.8" height="74.7" fill="#6557a7"/>
<rect x="1079.35" y="452.8" width="4.8" height="11.3" fill="#58b99d"/>
<rect x="1084.69" y="374.9" width="6.40" height="89.2" fill="#19191b"/>
<rect x="1085.49" y="375.9" width="4.8" height="73.7" fill="#6557a7"/>
<rect x="1085.49" y="449.6" width="4.8" height="14.5" fill="#58b99d"/>
<rect x="1090.83" y="385.0" width="6.40" height="79.1" fill="#19191b"/>
<rect x="1091.63" y="386.0" width="4.8" height="65.8" fill="#6557a7"/>
<rect x="1091.63" y="451.8" width="4.8" height="12.3" fill="#58b99d"/>
<rect x="1096.97" y="389.8" width="6.40" height="74.3" fill="#19191b"/>
<rect x="1097.77" y="390.8" width="4.8" height="62.0" fill="#6557a7"/>
<rect x="1097.77" y="452.8" width="4.8" height="11.3" fill="#58b99d"/>
<rect x="1103.11" y="378.1" width="6.40" height="86.0" fill="#19191b"/>
<rect x="1103.91" y="379.1" width="4.8" height="71.7" fill="#6557a7"/>
<rect x="1103.91" y="450.8" width="4.8" height="13.3" fill="#58b99d"/>
<rect x="1109.25" y="382.9" width="6.40" height="81.2" fill="#19191b"/>
<rect x="1110.05" y="383.9" width="4.8" height="65.6" fill="#6557a7"/>
<rect x="1110.05" y="449.5" width="4.8" height="14.6" fill="#58b99d"/>
<rect x="1115.39" y="369.0" width="6.40" height="95.1" fill="#19191b"/>
<rect x="1116.19" y="370.0" width="4.8" height="80.7" fill="#6557a7"/>
<rect x="1116.19" y="450.7" width="4.8" height="13.4" fill="#58b99d"/>
<rect x="1121.53" y="386.0" width="6.40" height="78.1" fill="#19191b"/>
<rect x="1122.33" y="387.0" width="4.8" height="65.8" fill="#6557a7"/>
<rect x="1122.33" y="452.8" width="4.8" height="11.3" fill="#58b99d"/>
<rect x="1127.67" y="388.3" width="6.40" height="75.8" fill="#19191b"/>
<rect x="1128.47" y="389.3" width="4.8" height="64.7" fill="#6557a7"/>
<rect x="1128.47" y="454.0" width="4.8" height="10.1" fill="#58b99d"/>
<rect x="1133.81" y="390.8" width="6.40" height="73.3" fill="#19191b"/>
<rect x="1134.61" y="391.8" width="4.8" height="61.0" fill="#6557a7"/>
<rect x="1134.61" y="452.8" width="4.8" height="11.3" fill="#58b99d"/>
<rect x="1139.95" y="391.8" width="6.40" height="72.3" fill="#19191b"/>
<rect x="1140.75" y="392.8" width="4.8" height="61.2" fill="#6557a7"/>
<rect x="1140.75" y="454.0" width="4.8" height="10.1" fill="#58b99d"/>
<rect x="1146.09" y="379.2" width="6.40" height="84.9" fill="#19191b"/>
<rect x="1146.89" y="380.2" width="4.8" height="69.3" fill="#6557a7"/>
<rect x="1146.89" y="449.5" width="4.8" height="14.6" fill="#58b99d"/>
<rect x="1152.23" y="402.1" width="6.40" height="62.0" fill="#19191b"/>
<rect x="1153.03" y="403.1" width="4.8" height="48.6" fill="#6557a7"/>
<rect x="1153.03" y="451.7" width="4.8" height="12.4" fill="#58b99d"/>
<rect x="1158.37" y="363.4" width="6.40" height="100.7" fill="#19191b"/>
<rect x="1159.17" y="364.4" width="4.8" height="82.7" fill="#6557a7"/>
<rect x="1159.17" y="447.1" width="4.8" height="17.0" fill="#58b99d"/>
<rect x="1164.51" y="379.2" width="6.40" height="84.9" fill="#19191b"/>
<rect x="1165.31" y="380.2" width="4.8" height="68.0" fill="#6557a7"/>
<rect x="1165.31" y="448.2" width="4.8" height="15.9" fill="#58b99d"/>
<rect x="1170.65" y="385.0" width="6.40" height="79.1" fill="#19191b"/>
<rect x="1171.45" y="386.0" width="4.8" height="63.5" fill="#6557a7"/>
<rect x="1171.45" y="449.5" width="4.8" height="14.6" fill="#58b99d"/>
<rect x="1176.79" y="387.2" width="6.40" height="76.9" fill="#19191b"/>
<rect x="1177.59" y="388.2" width="4.8" height="61.3" fill="#6557a7"/>
<rect x="1177.59" y="449.5" width="4.8" height="14.6" fill="#58b99d"/>
<rect x="1182.93" y="391.8" width="6.40" height="72.3" fill="#19191b"/>
<rect x="1183.73" y="392.8" width="4.8" height="58.9" fill="#6557a7"/>
<rect x="1183.73" y="451.7" width="4.8" height="12.4" fill="#58b99d"/>
<rect x="1189.07" y="368.1" width="6.40" height="96.0" fill="#19191b"/>
<rect x="1189.87" y="369.1" width="4.8" height="78.0" fill="#6557a7"/>
<rect x="1189.87" y="447.1" width="4.8" height="17.0" fill="#58b99d"/>
<rect x="1195.21" y="355.7" width="6.40" height="108.4" fill="#19191b"/>
<rect x="1196.01" y="356.7" width="4.8" height="86.2" fill="#6557a7"/>
<rect x="1196.01" y="442.9" width="4.8" height="21.2" fill="#58b99d"/>
<line x1="96" y1="464.6" x2="1200" y2="464.6" stroke="#28282b" stroke-width="1"/>
<line x1="165.6" y1="465" x2="165.6" y2="475.3" stroke="#2f2f33" stroke-width="1"/>
<text x="166.1" y="487" font-size="14" fill="#b4b4b4" text-anchor="middle" font-weight="normal" font-family='"Liberation Sans", sans-serif' >3. Apr</text>
<line x1="251.6" y1="465" x2="251.6" y2="475.3" stroke="#2f2f33" stroke-width="1"/>
<text x="252.1" y="487" font-size="14" fill="#b4b4b4" text-anchor="middle" font-weight="normal" font-family='"Liberation Sans", sans-serif' >17. Apr</text>
<line x1="337.5" y1="465" x2="337.5" y2="475.3" stroke="#2f2f33" stroke-width="1"/>
<text x="338.0" y="487" font-size="14" fill="#b4b4b4" text-anchor="middle" font-weight="normal" font-family='"Liberation Sans", sans-serif' >1. May</text>
<line x1="423.5" y1="465" x2="423.5" y2="475.3" stroke="#2f2f33" stroke-width="1"/>
<text x="424.0" y="487" font-size="14" fill="#b4b4b4" text-anchor="middle" font-weight="normal" font-family='"Liberation Sans", sans-serif' >15. May</text>
<line x1="509.4" y1="465" x2="509.4" y2="475.3" stroke="#2f2f33" stroke-width="1"/>
<text x="509.9" y="487" font-size="14" fill="#b4b4b4" text-anchor="middle" font-weight="normal" font-family='"Liberation Sans", sans-serif' >29. May</text>
<line x1="595.4" y1="465" x2="595.4" y2="475.3" stroke="#2f2f33" stroke-width="1"/>
<text x="595.9" y="487" font-size="14" fill="#b4b4b4" text-anchor="middle" font-weight="normal" font-family='"Liberation Sans", sans-serif' >12. Jun</text>
<line x1="681.3" y1="465" x2="681.3" y2="475.3" stroke="#2f2f33" stroke-width="1"/>
<text x="681.8" y="487" font-size="14" fill="#b4b4b4" text-anchor="middle" font-weight="normal" font-family='"Liberation Sans", sans-serif' >26. Jun</text>
<line x1="767.2" y1="465" x2="767.2" y2="475.3" stroke="#2f2f33" stroke-width="1"/>
<text x="767.8" y="487" font-size="14" fill="#b4b4b4" text-anchor="middle" font-weight="normal" font-family='"Liberation Sans", sans-serif' >10. Jul</text>
<line x1="853.2" y1="465" x2="853.2" y2="475.3" stroke="#2f2f33" stroke-width="1"/>
<text x="853.7" y="487" font-size="14" fill="#b4b4b4" text-anchor="middle" font-weight="normal" font-family='"Liberation Sans", sans-serif' >24. Jul</text>
<line x1="939.2" y1="465" x2="939.2" y2="475.3" stroke="#2f2f33" stroke-width="1"/>
<text x="939.7" y="487" font-size="14" fill="#b4b4b4" text-anchor="middle" font-weight="normal" font-family='"Liberation Sans", sans-serif' >7. Aug</text>
<line x1="1025.1" y1="465" x2="1025.1" y2="475.3" stroke="#2f2f33" stroke-width="1"/>
<text x="1025.6" y="487" font-size="14" fill="#b4b4b4" text-anchor="middle" font-weight="normal" font-family='"Liberation Sans", sans-serif' >21. Aug</text>
<line x1="1111.0" y1="465" x2="1111.0" y2="475.3" stroke="#2f2f33" stroke-width="1"/>
<text x="1111.5" y="487" font-size="14" fill="#b4b4b4" text-anchor="middle" font-weight="normal" font-family='"Liberation Sans", sans-serif' >4. Sep</text>
<line x1="1197.0" y1="465" x2="1197.0" y2="475.3" stroke="#2f2f33" stroke-width="1"/>
<text x="1200.8" y="487" font-size="14" fill="#b4b4b4" text-anchor="end" font-weight="normal" font-family='"Liberation Sans", sans-serif' >18. Sep</text>
<rect x="95.5" y="521" width="1106" height="45.5" fill="#27272a"/>
<line x1="95.5" y1="521.5" x2="1201.5" y2="521.5" stroke="#2e2e31"/>
<line x1="163" y1="521" x2="163" y2="566.5" stroke="#37373a" stroke-width="1"/>
<text x="166" y="562" font-size="13" fill="#9d9d9d" text-anchor="start" font-weight="normal" font-family='"Liberation Sans", sans-serif' >3. Apr</text>
<line x1="421.5" y1="521" x2="421.5" y2="566.5" stroke="#37373a" stroke-width="1"/>
<text x="424.5" y="562" font-size="13" fill="#9d9d9d" text-anchor="start" font-weight="normal" font-family='"Liberation Sans", sans-serif' >15. May</text>
<line x1="680" y1="521" x2="680" y2="566.5" stroke="#37373a" stroke-width="1"/>
<text x="683" y="562" font-size="13" fill="#9d9d9d" text-anchor="start" font-weight="normal" font-family='"Liberation Sans", sans-serif' >26. Jun</text>
<line x1="940" y1="521" x2="940" y2="566.5" stroke="#37373a" stroke-width="1"/>
<text x="943" y="562" font-size="13" fill="#9d9d9d" text-anchor="start" font-weight="normal" font-family='"Liberation Sans", sans-serif' >7. Aug</text>
<path d="M96.00,555.27 C97.03,555.27 100.11,555.08 102.17,555.27 C104.22,555.45 106.28,556.17 108.34,556.37 C110.39,556.58 112.45,556.57 114.50,556.48 C116.56,556.39 118.61,555.83 120.67,555.82 C122.73,555.81 124.78,556.33 126.84,556.39 C128.89,556.45 130.95,556.36 133.01,556.20 C135.06,556.04 137.12,555.58 139.17,555.46 C141.23,555.33 143.28,555.43 145.34,555.46 C147.40,555.49 149.45,555.57 151.51,555.63 C153.56,555.69 155.62,555.87 157.68,555.84 C159.73,555.81 161.79,555.71 163.84,555.46 C165.90,555.20 167.96,554.31 170.01,554.30 C172.07,554.28 174.12,555.18 176.18,555.37 C178.23,555.56 180.29,555.39 182.35,555.46 C184.40,555.53 186.46,555.82 188.51,555.79 C190.57,555.75 192.63,555.25 194.68,555.25 C196.74,555.25 198.79,555.79 200.85,555.79 C202.91,555.79 204.96,555.31 207.02,555.25 C209.07,555.19 211.13,555.47 213.18,555.44 C215.24,555.41 217.30,555.10 219.35,555.08 C221.41,555.05 223.46,555.83 225.52,555.30 C227.58,554.77 229.63,552.08 231.69,551.88 C233.74,551.67 235.80,553.48 237.85,554.07 C239.91,554.66 241.97,555.52 244.02,555.42 C246.08,555.32 248.13,553.63 250.19,553.47 C252.25,553.31 254.30,554.31 256.36,554.47 C258.41,554.63 260.47,554.42 262.53,554.42 C264.58,554.42 266.64,554.46 268.69,554.47 C270.75,554.48 272.80,554.31 274.86,554.47 C276.92,554.63 278.97,555.39 281.03,555.46 C283.08,555.52 285.14,554.92 287.20,554.85 C289.25,554.78 291.31,554.99 293.36,555.06 C295.42,555.13 297.47,555.29 299.53,555.25 C301.59,555.21 303.64,554.82 305.70,554.82 C307.75,554.82 309.81,555.60 311.87,555.25 C313.92,554.90 315.98,552.69 318.03,552.72 C320.09,552.75 322.15,555.19 324.20,555.42 C326.26,555.66 328.31,554.35 330.37,554.12 C332.42,553.90 334.48,554.02 336.54,554.07 C338.59,554.12 340.65,554.34 342.70,554.44 C344.76,554.53 346.82,554.61 348.87,554.64 C350.93,554.68 352.98,554.59 355.04,554.66 C357.09,554.73 359.15,555.05 361.21,555.08 C363.26,555.10 365.32,554.81 367.37,554.83 C369.43,554.86 371.49,555.60 373.54,555.25 C375.60,554.90 377.65,552.72 379.71,552.72 C381.77,552.73 383.82,555.01 385.88,555.27 C387.93,555.52 389.99,554.39 392.04,554.26 C394.10,554.13 396.16,554.43 398.21,554.49 C400.27,554.55 402.32,554.65 404.38,554.61 C406.44,554.57 408.49,554.29 410.55,554.26 C412.60,554.23 414.66,554.38 416.72,554.44 C418.77,554.49 420.83,554.57 422.88,554.61 C424.94,554.65 426.99,554.75 429.05,554.66 C431.11,554.57 433.16,554.19 435.22,554.09 C437.27,553.99 439.33,554.03 441.39,554.09 C443.44,554.15 445.50,554.41 447.55,554.44 C449.61,554.46 451.66,554.23 453.72,554.26 C455.78,554.29 457.83,554.58 459.89,554.61 C461.94,554.64 464.00,554.49 466.06,554.44 C468.11,554.38 470.17,554.25 472.22,554.26 C474.28,554.27 476.34,554.46 478.39,554.49 C480.45,554.52 482.50,554.44 484.56,554.44 C486.61,554.43 488.67,554.46 490.73,554.44 C492.78,554.41 494.84,554.69 496.89,554.26 C498.95,553.84 501.01,551.89 503.06,551.89 C505.12,551.89 507.17,553.84 509.23,554.26 C511.28,554.69 513.34,554.53 515.40,554.44 C517.45,554.34 519.51,553.72 521.56,553.69 C523.62,553.66 525.68,554.43 527.73,554.26 C529.79,554.10 531.84,552.83 533.90,552.69 C535.96,552.55 538.01,553.28 540.07,553.43 C542.12,553.59 544.18,553.58 546.23,553.61 C548.29,553.63 550.35,553.80 552.40,553.61 C554.46,553.42 556.51,552.59 558.57,552.46 C560.63,552.34 562.68,552.66 564.74,552.86 C566.79,553.07 568.85,553.66 570.91,553.69 C572.96,553.72 575.02,553.11 577.07,553.03 C579.13,552.96 581.18,553.01 583.24,553.24 C585.30,553.48 587.35,555.15 589.41,554.44 C591.46,553.72 593.52,549.00 595.58,548.97 C597.63,548.94 599.69,553.41 601.74,554.26 C603.80,555.12 605.85,554.55 607.91,554.09 C609.97,553.63 612.02,551.62 614.08,551.51 C616.13,551.41 618.19,553.41 620.25,553.47 C622.30,553.52 624.36,551.73 626.41,551.86 C628.47,551.99 630.53,553.83 632.58,554.26 C634.64,554.69 636.69,554.49 638.75,554.44 C640.80,554.38 642.86,554.00 644.92,553.92 C646.97,553.83 649.03,553.95 651.08,553.92 C653.14,553.88 655.20,553.80 657.25,553.69 C659.31,553.58 661.36,553.43 663.42,553.26 C665.47,553.09 667.53,552.83 669.59,552.67 C671.64,552.51 673.70,552.29 675.75,552.29 C677.81,552.29 679.87,552.82 681.92,552.69 C683.98,552.56 686.03,551.48 688.09,551.51 C690.15,551.54 692.20,552.46 694.26,552.86 C696.31,553.26 698.37,553.98 700.42,553.92 C702.48,553.85 704.54,552.61 706.59,552.46 C708.65,552.32 710.70,552.94 712.76,553.07 C714.82,553.20 716.87,553.24 718.93,553.24 C720.98,553.24 723.04,553.26 725.09,553.07 C727.15,552.88 729.21,551.89 731.26,552.12 C733.32,552.35 735.37,554.17 737.43,554.44 C739.49,554.70 741.54,553.69 743.60,553.69 C745.65,553.69 747.71,554.33 749.77,554.45 C751.82,554.58 753.88,554.89 755.93,554.45 C757.99,554.02 760.04,551.70 762.10,551.86 C764.16,552.01 766.21,555.15 768.27,555.39 C770.32,555.62 772.38,553.57 774.44,553.28 C776.49,552.98 778.55,553.96 780.60,553.62 C782.66,553.29 784.72,551.87 786.77,551.25 C788.83,550.63 790.88,549.54 792.94,549.90 C794.99,550.26 797.05,552.80 799.11,553.42 C801.16,554.04 803.22,553.59 805.27,553.62 C807.33,553.66 809.39,553.52 811.44,553.62 C813.50,553.73 815.55,554.34 817.61,554.25 C819.66,554.15 821.72,553.57 823.78,553.07 C825.83,552.57 827.89,551.58 829.94,551.25 C832.00,550.93 834.06,550.69 836.11,551.11 C838.17,551.54 840.22,553.27 842.28,553.80 C844.34,554.32 846.39,554.34 848.45,554.25 C850.50,554.15 852.56,553.21 854.61,553.24 C856.67,553.27 858.73,554.31 860.78,554.44 C862.84,554.57 864.89,554.05 866.95,554.02 C869.01,553.99 871.06,554.23 873.12,554.25 C875.17,554.26 877.23,554.32 879.28,554.09 C881.34,553.86 883.40,554.24 885.45,552.86 C887.51,551.48 889.56,550.49 891.62,545.80 C893.68,541.11 895.73,526.74 897.79,524.71 C899.84,522.69 901.90,531.36 903.96,533.68 C906.01,535.99 908.07,537.42 910.12,538.62 C912.18,539.83 914.23,539.59 916.29,540.92 C918.35,542.26 920.40,545.93 922.46,546.65 C924.51,547.37 926.57,544.85 928.63,545.27 C930.68,545.69 932.74,548.58 934.79,549.16 C936.85,549.74 938.91,548.38 940.96,548.76 C943.02,549.14 945.07,550.92 947.13,551.44 C949.18,551.96 951.24,551.98 953.30,551.89 C955.35,551.81 957.41,552.39 959.46,550.92 C961.52,549.46 963.58,543.48 965.63,543.12 C967.69,542.76 969.74,547.06 971.80,548.78 C973.85,550.50 975.91,552.83 977.97,553.43 C980.02,554.03 982.08,552.73 984.13,552.38 C986.19,552.03 988.25,551.20 990.30,551.32 C992.36,551.44 994.41,552.73 996.47,553.09 C998.53,553.44 1000.58,553.14 1002.64,553.47 C1004.69,553.79 1006.75,554.67 1008.80,555.02 C1010.86,555.38 1012.92,555.48 1014.97,555.61 C1017.03,555.75 1019.08,555.80 1021.14,555.84 C1023.20,555.87 1025.25,555.89 1027.31,555.82 C1029.36,555.75 1031.42,555.54 1033.47,555.40 C1035.53,555.27 1037.59,555.09 1039.64,555.02 C1041.70,554.96 1043.75,554.92 1045.81,555.02 C1047.87,555.13 1049.92,555.45 1051.98,555.65 C1054.03,555.85 1056.09,556.24 1058.15,556.22 C1060.20,556.19 1062.26,555.63 1064.31,555.49 C1066.37,555.36 1068.42,555.98 1070.48,555.40 C1072.54,554.83 1074.59,552.40 1076.65,552.05 C1078.70,551.69 1080.76,553.04 1082.82,553.28 C1084.87,553.51 1086.93,553.19 1088.98,553.45 C1091.04,553.71 1093.09,554.48 1095.15,554.82 C1097.21,555.15 1099.26,555.64 1101.32,555.47 C1103.37,555.30 1105.43,553.90 1107.49,553.80 C1109.54,553.69 1111.60,555.11 1113.65,554.85 C1115.71,554.59 1117.77,552.24 1119.82,552.24 C1121.88,552.23 1123.93,554.36 1125.99,554.82 C1128.04,555.28 1130.10,554.87 1132.16,555.01 C1134.21,555.15 1136.27,555.55 1138.32,555.65 C1140.38,555.75 1142.44,555.85 1144.49,555.61 C1146.55,555.37 1148.60,553.85 1150.66,554.21 C1152.72,554.57 1154.77,558.18 1156.83,557.79 C1158.88,557.41 1160.94,552.45 1162.99,551.89 C1165.05,551.33 1167.11,553.88 1169.16,554.44 C1171.22,554.99 1173.27,555.02 1175.33,555.21 C1177.39,555.41 1179.44,555.46 1181.50,555.60 C1183.55,555.73 1185.61,556.49 1187.66,556.01 C1189.72,555.53 1191.78,553.49 1193.83,552.71 C1195.89,551.92 1198.97,551.52 1200.00,551.29 L1200,566.5 L96,566.5 Z" fill="#6a5bab" fill-opacity="0.03"/>
<path d="M96.00,564.44 C97.03,564.47 100.11,564.66 102.17,564.63 C104.22,564.59 106.28,564.22 108.34,564.25 C110.39,564.27 112.45,564.74 114.50,564.80 C116.56,564.86 118.61,564.72 120.67,564.63 C122.73,564.53 124.78,564.28 126.84,564.25 C128.89,564.21 130.95,564.40 133.01,564.44 C135.06,564.47 137.12,564.44 139.17,564.44 C141.23,564.44 143.28,564.37 145.34,564.44 C147.40,564.50 149.45,564.80 151.51,564.80 C153.56,564.80 155.62,564.50 157.68,564.44 C159.73,564.37 161.79,564.37 163.84,564.44 C165.90,564.50 167.96,564.86 170.01,564.80 C172.07,564.74 174.12,564.10 176.18,564.07 C178.23,564.04 180.29,564.53 182.35,564.63 C184.40,564.72 186.46,564.64 188.51,564.64 C190.57,564.65 192.63,564.64 194.68,564.64 C196.74,564.64 198.79,564.64 200.85,564.64 C202.91,564.64 204.96,564.64 207.02,564.64 C209.07,564.64 211.13,564.64 213.18,564.64 C215.24,564.64 217.30,564.68 219.35,564.64 C221.41,564.61 223.46,564.48 225.52,564.42 C227.58,564.35 229.63,564.21 231.69,564.25 C233.74,564.28 235.80,564.58 237.85,564.64 C239.91,564.71 241.97,564.68 244.02,564.64 C246.08,564.61 248.13,564.46 250.19,564.42 C252.25,564.38 254.30,564.38 256.36,564.42 C258.41,564.46 260.47,564.64 262.53,564.64 C264.58,564.64 266.64,564.46 268.69,564.42 C270.75,564.38 272.80,564.35 274.86,564.42 C276.92,564.48 278.97,564.82 281.03,564.82 C283.08,564.82 285.14,564.45 287.20,564.42 C289.25,564.39 291.31,564.58 293.36,564.64 C295.42,564.71 297.47,564.82 299.53,564.82 C301.59,564.82 303.64,564.67 305.70,564.64 C307.75,564.61 309.81,564.68 311.87,564.64 C313.92,564.61 315.98,564.42 318.03,564.42 C320.09,564.42 322.15,564.64 324.20,564.64 C326.26,564.64 328.31,564.42 330.37,564.42 C332.42,564.42 334.48,564.61 336.54,564.64 C338.59,564.68 340.65,564.60 342.70,564.63 C344.76,564.65 346.82,564.85 348.87,564.82 C350.93,564.78 352.98,564.40 355.04,564.40 C357.09,564.40 359.15,564.78 361.21,564.82 C363.26,564.85 365.32,564.63 367.37,564.63 C369.43,564.63 371.49,564.88 373.54,564.82 C375.60,564.75 377.65,564.26 379.71,564.23 C381.77,564.20 383.82,564.56 385.88,564.63 C387.93,564.69 389.99,564.66 392.04,564.63 C394.10,564.59 396.16,564.40 398.21,564.40 C400.27,564.40 402.32,564.59 404.38,564.63 C406.44,564.66 408.49,564.63 410.55,564.63 C412.60,564.63 414.66,564.63 416.72,564.63 C418.77,564.63 420.83,564.66 422.88,564.63 C424.94,564.59 426.99,564.40 429.05,564.40 C431.11,564.40 433.16,564.59 435.22,564.63 C437.27,564.66 439.33,564.63 441.39,564.63 C443.44,564.63 445.50,564.63 447.55,564.63 C449.61,564.63 451.66,564.63 453.72,564.63 C455.78,564.63 457.83,564.63 459.89,564.63 C461.94,564.63 464.00,564.63 466.06,564.63 C468.11,564.63 470.17,564.66 472.22,564.63 C474.28,564.59 476.34,564.40 478.39,564.40 C480.45,564.40 482.50,564.59 484.56,564.63 C486.61,564.66 488.67,564.63 490.73,564.63 C492.78,564.63 494.84,564.63 496.89,564.63 C498.95,564.63 501.01,564.63 503.06,564.63 C505.12,564.63 507.17,564.63 509.23,564.63 C511.28,564.63 513.34,564.63 515.40,564.63 C517.45,564.63 519.51,564.65 521.56,564.63 C523.62,564.60 525.68,564.48 527.73,564.45 C529.79,564.42 531.84,564.45 533.90,564.45 C535.96,564.45 538.01,564.45 540.07,564.45 C542.12,564.45 544.18,564.48 546.23,564.45 C548.29,564.42 550.35,564.31 552.40,564.28 C554.46,564.25 556.51,564.28 558.57,564.28 C560.63,564.28 562.68,564.22 564.74,564.28 C566.79,564.34 568.85,564.60 570.91,564.63 C572.96,564.65 575.02,564.71 577.07,564.45 C579.13,564.19 581.18,563.04 583.24,563.07 C585.30,563.10 587.35,564.37 589.41,564.63 C591.46,564.89 593.52,564.63 595.58,564.63 C597.63,564.63 599.69,564.65 601.74,564.63 C603.80,564.60 605.85,564.48 607.91,564.45 C609.97,564.42 612.02,564.42 614.08,564.45 C616.13,564.48 618.19,564.63 620.25,564.63 C622.30,564.63 624.36,564.45 626.41,564.45 C628.47,564.45 630.53,564.60 632.58,564.63 C634.64,564.65 636.69,564.63 638.75,564.63 C640.80,564.63 642.86,564.63 644.92,564.63 C646.97,564.63 649.03,564.63 651.08,564.63 C653.14,564.63 655.20,564.63 657.25,564.63 C659.31,564.63 661.36,564.68 663.42,564.63 C665.47,564.57 667.53,564.31 669.59,564.28 C671.64,564.25 673.70,564.42 675.75,564.45 C677.81,564.48 679.87,564.45 681.92,564.45 C683.98,564.45 686.03,564.42 688.09,564.45 C690.15,564.48 692.20,564.60 694.26,564.63 C696.31,564.65 698.37,564.68 700.42,564.63 C702.48,564.57 704.54,564.31 706.59,564.28 C708.65,564.25 710.70,564.42 712.76,564.45 C714.82,564.48 716.87,564.45 718.93,564.45 C720.98,564.45 723.04,564.42 725.09,564.45 C727.15,564.48 729.21,564.60 731.26,564.63 C733.32,564.65 735.37,564.63 737.43,564.63 C739.49,564.63 741.54,564.59 743.60,564.63 C745.65,564.66 747.71,564.78 749.77,564.82 C751.82,564.85 753.88,564.88 755.93,564.82 C757.99,564.76 760.04,564.58 762.10,564.45 C764.16,564.33 766.21,564.14 768.27,564.07 C770.32,564.01 772.38,564.07 774.44,564.07 C776.49,564.07 778.55,564.14 780.60,564.07 C782.66,564.01 784.72,563.75 786.77,563.69 C788.83,563.63 790.88,563.59 792.94,563.69 C794.99,563.79 797.05,564.25 799.11,564.28 C801.16,564.31 803.22,563.93 805.27,563.90 C807.33,563.86 809.39,564.04 811.44,564.07 C813.50,564.10 815.55,564.07 817.61,564.07 C819.66,564.07 821.72,564.10 823.78,564.07 C825.83,564.04 827.89,563.90 829.94,563.90 C832.00,563.90 834.06,564.04 836.11,564.07 C838.17,564.10 840.22,564.04 842.28,564.07 C844.34,564.10 846.39,564.31 848.45,564.25 C850.50,564.18 852.56,563.69 854.61,563.69 C856.67,563.69 858.73,564.18 860.78,564.25 C862.84,564.31 864.89,564.07 866.95,564.07 C869.01,564.07 871.06,564.22 873.12,564.25 C875.17,564.27 877.23,564.27 879.28,564.25 C881.34,564.22 883.40,564.30 885.45,564.07 C887.51,563.84 889.56,563.63 891.62,562.88 C893.68,562.13 895.73,559.93 897.79,559.57 C899.84,559.22 901.90,560.36 903.96,560.75 C906.01,561.14 908.07,561.67 910.12,561.89 C912.18,562.11 914.23,561.89 916.29,562.08 C918.35,562.28 920.40,562.90 922.46,563.07 C924.51,563.23 926.57,563.00 928.63,563.07 C930.68,563.14 932.74,563.40 934.79,563.47 C936.85,563.53 938.91,563.47 940.96,563.47 C943.02,563.47 945.07,563.50 947.13,563.47 C949.18,563.43 951.24,563.24 953.30,563.24 C955.35,563.24 957.41,563.66 959.46,563.47 C961.52,563.27 963.58,562.15 965.63,562.08 C967.69,562.02 969.74,562.74 971.80,563.07 C973.85,563.40 975.91,564.04 977.97,564.07 C980.02,564.10 982.08,563.38 984.13,563.24 C986.19,563.10 988.25,563.17 990.30,563.24 C992.36,563.32 994.41,564.21 996.47,563.69 C998.53,563.17 1000.58,560.06 1002.64,560.13 C1004.69,560.19 1006.75,563.41 1008.80,564.07 C1010.86,564.73 1012.92,564.07 1014.97,564.07 C1017.03,564.07 1019.08,564.01 1021.14,564.07 C1023.20,564.14 1025.25,564.45 1027.31,564.45 C1029.36,564.45 1031.42,564.07 1033.47,564.07 C1035.53,564.07 1037.59,564.45 1039.64,564.45 C1041.70,564.45 1043.75,564.04 1045.81,564.07 C1047.87,564.10 1049.92,564.60 1051.98,564.63 C1054.03,564.65 1056.09,564.31 1058.15,564.25 C1060.20,564.18 1062.26,564.30 1064.31,564.25 C1066.37,564.19 1068.42,563.96 1070.48,563.90 C1072.54,563.84 1074.59,563.84 1076.65,563.90 C1078.70,563.96 1080.76,564.28 1082.82,564.25 C1084.87,564.21 1086.93,563.72 1088.98,563.69 C1091.04,563.66 1093.09,563.98 1095.15,564.07 C1097.21,564.16 1099.26,564.27 1101.32,564.25 C1103.37,564.22 1105.43,563.99 1107.49,563.90 C1109.54,563.80 1111.60,563.68 1113.65,563.67 C1115.71,563.67 1117.77,563.79 1119.82,563.88 C1121.88,563.98 1123.93,564.15 1125.99,564.25 C1128.04,564.34 1130.10,564.45 1132.16,564.45 C1134.21,564.45 1136.27,564.25 1138.32,564.25 C1140.38,564.25 1142.44,564.55 1144.49,564.45 C1146.55,564.36 1148.60,563.74 1150.66,563.67 C1152.72,563.61 1154.77,564.12 1156.83,564.05 C1158.88,563.99 1160.94,563.36 1162.99,563.26 C1165.05,563.16 1167.11,563.38 1169.16,563.45 C1171.22,563.52 1173.27,563.64 1175.33,563.67 C1177.39,563.71 1179.44,563.61 1181.50,563.67 C1183.55,563.74 1185.61,564.12 1187.66,564.05 C1189.72,563.99 1191.78,563.51 1193.83,563.26 C1195.89,563.01 1198.97,562.65 1200.00,562.53 L1200,566.5 L96,566.5 Z" fill="#5bbfa1" fill-opacity="0.05"/>
<path d="M96.00,555.27 C97.03,555.27 100.11,555.08 102.17,555.27 C104.22,555.45 106.28,556.17 108.34,556.37 C110.39,556.58 112.45,556.57 114.50,556.48 C116.56,556.39 118.61,555.83 120.67,555.82 C122.73,555.81 124.78,556.33 126.84,556.39 C128.89,556.45 130.95,556.36 133.01,556.20 C135.06,556.04 137.12,555.58 139.17,555.46 C141.23,555.33 143.28,555.43 145.34,555.46 C147.40,555.49 149.45,555.57 151.51,555.63 C153.56,555.69 155.62,555.87 157.68,555.84 C159.73,555.81 161.79,555.71 163.84,555.46 C165.90,555.20 167.96,554.31 170.01,554.30 C172.07,554.28 174.12,555.18 176.18,555.37 C178.23,555.56 180.29,555.39 182.35,555.46 C184.40,555.53 186.46,555.82 188.51,555.79 C190.57,555.75 192.63,555.25 194.68,555.25 C196.74,555.25 198.79,555.79 200.85,555.79 C202.91,555.79 204.96,555.31 207.02,555.25 C209.07,555.19 211.13,555.47 213.18,555.44 C215.24,555.41 217.30,555.10 219.35,555.08 C221.41,555.05 223.46,555.83 225.52,555.30 C227.58,554.77 229.63,552.08 231.69,551.88 C233.74,551.67 235.80,553.48 237.85,554.07 C239.91,554.66 241.97,555.52 244.02,555.42 C246.08,555.32 248.13,553.63 250.19,553.47 C252.25,553.31 254.30,554.31 256.36,554.47 C258.41,554.63 260.47,554.42 262.53,554.42 C264.58,554.42 266.64,554.46 268.69,554.47 C270.75,554.48 272.80,554.31 274.86,554.47 C276.92,554.63 278.97,555.39 281.03,555.46 C283.08,555.52 285.14,554.92 287.20,554.85 C289.25,554.78 291.31,554.99 293.36,555.06 C295.42,555.13 297.47,555.29 299.53,555.25 C301.59,555.21 303.64,554.82 305.70,554.82 C307.75,554.82 309.81,555.60 311.87,555.25 C313.92,554.90 315.98,552.69 318.03,552.72 C320.09,552.75 322.15,555.19 324.20,555.42 C326.26,555.66 328.31,554.35 330.37,554.12 C332.42,553.90 334.48,554.02 336.54,554.07 C338.59,554.12 340.65,554.34 342.70,554.44 C344.76,554.53 346.82,554.61 348.87,554.64 C350.93,554.68 352.98,554.59 355.04,554.66 C357.09,554.73 359.15,555.05 361.21,555.08 C363.26,555.10 365.32,554.81 367.37,554.83 C369.43,554.86 371.49,555.60 373.54,555.25 C375.60,554.90 377.65,552.72 379.71,552.72 C381.77,552.73 383.82,555.01 385.88,555.27 C387.93,555.52 389.99,554.39 392.04,554.26 C394.10,554.13 396.16,554.43 398.21,554.49 C400.27,554.55 402.32,554.65 404.38,554.61 C406.44,554.57 408.49,554.29 410.55,554.26 C412.60,554.23 414.66,554.38 416.72,554.44 C418.77,554.49 420.83,554.57 422.88,554.61 C424.94,554.65 426.99,554.75 429.05,554.66 C431.11,554.57 433.16,554.19 435.22,554.09 C437.27,553.99 439.33,554.03 441.39,554.09 C443.44,554.15 445.50,554.41 447.55,554.44 C449.61,554.46 451.66,554.23 453.72,554.26 C455.78,554.29 457.83,554.58 459.89,554.61 C461.94,554.64 464.00,554.49 466.06,554.44 C468.11,554.38 470.17,554.25 472.22,554.26 C474.28,554.27 476.34,554.46 478.39,554.49 C480.45,554.52 482.50,554.44 484.56,554.44 C486.61,554.43 488.67,554.46 490.73,554.44 C492.78,554.41 494.84,554.69 496.89,554.26 C498.95,553.84 501.01,551.89 503.06,551.89 C505.12,551.89 507.17,553.84 509.23,554.26 C511.28,554.69 513.34,554.53 515.40,554.44 C517.45,554.34 519.51,553.72 521.56,553.69 C523.62,553.66 525.68,554.43 527.73,554.26 C529.79,554.10 531.84,552.83 533.90,552.69 C535.96,552.55 538.01,553.28 540.07,553.43 C542.12,553.59 544.18,553.58 546.23,553.61 C548.29,553.63 550.35,553.80 552.40,553.61 C554.46,553.42 556.51,552.59 558.57,552.46 C560.63,552.34 562.68,552.66 564.74,552.86 C566.79,553.07 568.85,553.66 570.91,553.69 C572.96,553.72 575.02,553.11 577.07,553.03 C579.13,552.96 581.18,553.01 583.24,553.24 C585.30,553.48 587.35,555.15 589.41,554.44 C591.46,553.72 593.52,549.00 595.58,548.97 C597.63,548.94 599.69,553.41 601.74,554.26 C603.80,555.12 605.85,554.55 607.91,554.09 C609.97,553.63 612.02,551.62 614.08,551.51 C616.13,551.41 618.19,553.41 620.25,553.47 C622.30,553.52 624.36,551.73 626.41,551.86 C628.47,551.99 630.53,553.83 632.58,554.26 C634.64,554.69 636.69,554.49 638.75,554.44 C640.80,554.38 642.86,554.00 644.92,553.92 C646.97,553.83 649.03,553.95 651.08,553.92 C653.14,553.88 655.20,553.80 657.25,553.69 C659.31,553.58 661.36,553.43 663.42,553.26 C665.47,553.09 667.53,552.83 669.59,552.67 C671.64,552.51 673.70,552.29 675.75,552.29 C677.81,552.29 679.87,552.82 681.92,552.69 C683.98,552.56 686.03,551.48 688.09,551.51 C690.15,551.54 692.20,552.46 694.26,552.86 C696.31,553.26 698.37,553.98 700.42,553.92 C702.48,553.85 704.54,552.61 706.59,552.46 C708.65,552.32 710.70,552.94 712.76,553.07 C714.82,553.20 716.87,553.24 718.93,553.24 C720.98,553.24 723.04,553.26 725.09,553.07 C727.15,552.88 729.21,551.89 731.26,552.12 C733.32,552.35 735.37,554.17 737.43,554.44 C739.49,554.70 741.54,553.69 743.60,553.69 C745.65,553.69 747.71,554.33 749.77,554.45 C751.82,554.58 753.88,554.89 755.93,554.45 C757.99,554.02 760.04,551.70 762.10,551.86 C764.16,552.01 766.21,555.15 768.27,555.39 C770.32,555.62 772.38,553.57 774.44,553.28 C776.49,552.98 778.55,553.96 780.60,553.62 C782.66,553.29 784.72,551.87 786.77,551.25 C788.83,550.63 790.88,549.54 792.94,549.90 C794.99,550.26 797.05,552.80 799.11,553.42 C801.16,554.04 803.22,553.59 805.27,553.62 C807.33,553.66 809.39,553.52 811.44,553.62 C813.50,553.73 815.55,554.34 817.61,554.25 C819.66,554.15 821.72,553.57 823.78,553.07 C825.83,552.57 827.89,551.58 829.94,551.25 C832.00,550.93 834.06,550.69 836.11,551.11 C838.17,551.54 840.22,553.27 842.28,553.80 C844.34,554.32 846.39,554.34 848.45,554.25 C850.50,554.15 852.56,553.21 854.61,553.24 C856.67,553.27 858.73,554.31 860.78,554.44 C862.84,554.57 864.89,554.05 866.95,554.02 C869.01,553.99 871.06,554.23 873.12,554.25 C875.17,554.26 877.23,554.32 879.28,554.09 C881.34,553.86 883.40,554.24 885.45,552.86 C887.51,551.48 889.56,550.49 891.62,545.80 C893.68,541.11 895.73,526.74 897.79,524.71 C899.84,522.69 901.90,531.36 903.96,533.68 C906.01,535.99 908.07,537.42 910.12,538.62 C912.18,539.83 914.23,539.59 916.29,540.92 C918.35,542.26 920.40,545.93 922.46,546.65 C924.51,547.37 926.57,544.85 928.63,545.27 C930.68,545.69 932.74,548.58 934.79,549.16 C936.85,549.74 938.91,548.38 940.96,548.76 C943.02,549.14 945.07,550.92 947.13,551.44 C949.18,551.96 951.24,551.98 953.30,551.89 C955.35,551.81 957.41,552.39 959.46,550.92 C961.52,549.46 963.58,543.48 965.63,543.12 C967.69,542.76 969.74,547.06 971.80,548.78 C973.85,550.50 975.91,552.83 977.97,553.43 C980.02,554.03 982.08,552.73 984.13,552.38 C986.19,552.03 988.25,551.20 990.30,551.32 C992.36,551.44 994.41,552.73 996.47,553.09 C998.53,553.44 1000.58,553.14 1002.64,553.47 C1004.69,553.79 1006.75,554.67 1008.80,555.02 C1010.86,555.38 1012.92,555.48 1014.97,555.61 C1017.03,555.75 1019.08,555.80 1021.14,555.84 C1023.20,555.87 1025.25,555.89 1027.31,555.82 C1029.36,555.75 1031.42,555.54 1033.47,555.40 C1035.53,555.27 1037.59,555.09 1039.64,555.02 C1041.70,554.96 1043.75,554.92 1045.81,555.02 C1047.87,555.13 1049.92,555.45 1051.98,555.65 C1054.03,555.85 1056.09,556.24 1058.15,556.22 C1060.20,556.19 1062.26,555.63 1064.31,555.49 C1066.37,555.36 1068.42,555.98 1070.48,555.40 C1072.54,554.83 1074.59,552.40 1076.65,552.05 C1078.70,551.69 1080.76,553.04 1082.82,553.28 C1084.87,553.51 1086.93,553.19 1088.98,553.45 C1091.04,553.71 1093.09,554.48 1095.15,554.82 C1097.21,555.15 1099.26,555.64 1101.32,555.47 C1103.37,555.30 1105.43,553.90 1107.49,553.80 C1109.54,553.69 1111.60,555.11 1113.65,554.85 C1115.71,554.59 1117.77,552.24 1119.82,552.24 C1121.88,552.23 1123.93,554.36 1125.99,554.82 C1128.04,555.28 1130.10,554.87 1132.16,555.01 C1134.21,555.15 1136.27,555.55 1138.32,555.65 C1140.38,555.75 1142.44,555.85 1144.49,555.61 C1146.55,555.37 1148.60,553.85 1150.66,554.21 C1152.72,554.57 1154.77,558.18 1156.83,557.79 C1158.88,557.41 1160.94,552.45 1162.99,551.89 C1165.05,551.33 1167.11,553.88 1169.16,554.44 C1171.22,554.99 1173.27,555.02 1175.33,555.21 C1177.39,555.41 1179.44,555.46 1181.50,555.60 C1183.55,555.73 1185.61,556.49 1187.66,556.01 C1189.72,555.53 1191.78,553.49 1193.83,552.71 C1195.89,551.92 1198.97,551.52 1200.00,551.29" fill="none" stroke="#6a5cb3" stroke-width="1.25"/>
<path d="M96.00,564.44 C97.03,564.47 100.11,564.66 102.17,564.63 C104.22,564.59 106.28,564.22 108.34,564.25 C110.39,564.27 112.45,564.74 114.50,564.80 C116.56,564.86 118.61,564.72 120.67,564.63 C122.73,564.53 124.78,564.28 126.84,564.25 C128.89,564.21 130.95,564.40 133.01,564.44 C135.06,564.47 137.12,564.44 139.17,564.44 C141.23,564.44 143.28,564.37 145.34,564.44 C147.40,564.50 149.45,564.80 151.51,564.80 C153.56,564.80 155.62,564.50 157.68,564.44 C159.73,564.37 161.79,564.37 163.84,564.44 C165.90,564.50 167.96,564.86 170.01,564.80 C172.07,564.74 174.12,564.10 176.18,564.07 C178.23,564.04 180.29,564.53 182.35,564.63 C184.40,564.72 186.46,564.64 188.51,564.64 C190.57,564.65 192.63,564.64 194.68,564.64 C196.74,564.64 198.79,564.64 200.85,564.64 C202.91,564.64 204.96,564.64 207.02,564.64 C209.07,564.64 211.13,564.64 213.18,564.64 C215.24,564.64 217.30,564.68 219.35,564.64 C221.41,564.61 223.46,564.48 225.52,564.42 C227.58,564.35 229.63,564.21 231.69,564.25 C233.74,564.28 235.80,564.58 237.85,564.64 C239.91,564.71 241.97,564.68 244.02,564.64 C246.08,564.61 248.13,564.46 250.19,564.42 C252.25,564.38 254.30,564.38 256.36,564.42 C258.41,564.46 260.47,564.64 262.53,564.64 C264.58,564.64 266.64,564.46 268.69,564.42 C270.75,564.38 272.80,564.35 274.86,564.42 C276.92,564.48 278.97,564.82 281.03,564.82 C283.08,564.82 285.14,564.45 287.20,564.42 C289.25,564.39 291.31,564.58 293.36,564.64 C295.42,564.71 297.47,564.82 299.53,564.82 C301.59,564.82 303.64,564.67 305.70,564.64 C307.75,564.61 309.81,564.68 311.87,564.64 C313.92,564.61 315.98,564.42 318.03,564.42 C320.09,564.42 322.15,564.64 324.20,564.64 C326.26,564.64 328.31,564.42 330.37,564.42 C332.42,564.42 334.48,564.61 336.54,564.64 C338.59,564.68 340.65,564.60 342.70,564.63 C344.76,564.65 346.82,564.85 348.87,564.82 C350.93,564.78 352.98,564.40 355.04,564.40 C357.09,564.40 359.15,564.78 361.21,564.82 C363.26,564.85 365.32,564.63 367.37,564.63 C369.43,564.63 371.49,564.88 373.54,564.82 C375.60,564.75 377.65,564.26 379.71,564.23 C381.77,564.20 383.82,564.56 385.88,564.63 C387.93,564.69 389.99,564.66 392.04,564.63 C394.10,564.59 396.16,564.40 398.21,564.40 C400.27,564.40 402.32,564.59 404.38,564.63 C406.44,564.66 408.49,564.63 410.55,564.63 C412.60,564.63 414.66,564.63 416.72,564.63 C418.77,564.63 420.83,564.66 422.88,564.63 C424.94,564.59 426.99,564.40 429.05,564.40 C431.11,564.40 433.16,564.59 435.22,564.63 C437.27,564.66 439.33,564.63 441.39,564.63 C443.44,564.63 445.50,564.63 447.55,564.63 C449.61,564.63 451.66,564.63 453.72,564.63 C455.78,564.63 457.83,564.63 459.89,564.63 C461.94,564.63 464.00,564.63 466.06,564.63 C468.11,564.63 470.17,564.66 472.22,564.63 C474.28,564.59 476.34,564.40 478.39,564.40 C480.45,564.40 482.50,564.59 484.56,564.63 C486.61,564.66 488.67,564.63 490.73,564.63 C492.78,564.63 494.84,564.63 496.89,564.63 C498.95,564.63 501.01,564.63 503.06,564.63 C505.12,564.63 507.17,564.63 509.23,564.63 C511.28,564.63 513.34,564.63 515.40,564.63 C517.45,564.63 519.51,564.65 521.56,564.63 C523.62,564.60 525.68,564.48 527.73,564.45 C529.79,564.42 531.84,564.45 533.90,564.45 C535.96,564.45 538.01,564.45 540.07,564.45 C542.12,564.45 544.18,564.48 546.23,564.45 C548.29,564.42 550.35,564.31 552.40,564.28 C554.46,564.25 556.51,564.28 558.57,564.28 C560.63,564.28 562.68,564.22 564.74,564.28 C566.79,564.34 568.85,564.60 570.91,564.63 C572.96,564.65 575.02,564.71 577.07,564.45 C579.13,564.19 581.18,563.04 583.24,563.07 C585.30,563.10 587.35,564.37 589.41,564.63 C591.46,564.89 593.52,564.63 595.58,564.63 C597.63,564.63 599.69,564.65 601.74,564.63 C603.80,564.60 605.85,564.48 607.91,564.45 C609.97,564.42 612.02,564.42 614.08,564.45 C616.13,564.48 618.19,564.63 620.25,564.63 C622.30,564.63 624.36,564.45 626.41,564.45 C628.47,564.45 630.53,564.60 632.58,564.63 C634.64,564.65 636.69,564.63 638.75,564.63 C640.80,564.63 642.86,564.63 644.92,564.63 C646.97,564.63 649.03,564.63 651.08,564.63 C653.14,564.63 655.20,564.63 657.25,564.63 C659.31,564.63 661.36,564.68 663.42,564.63 C665.47,564.57 667.53,564.31 669.59,564.28 C671.64,564.25 673.70,564.42 675.75,564.45 C677.81,564.48 679.87,564.45 681.92,564.45 C683.98,564.45 686.03,564.42 688.09,564.45 C690.15,564.48 692.20,564.60 694.26,564.63 C696.31,564.65 698.37,564.68 700.42,564.63 C702.48,564.57 704.54,564.31 706.59,564.28 C708.65,564.25 710.70,564.42 712.76,564.45 C714.82,564.48 716.87,564.45 718.93,564.45 C720.98,564.45 723.04,564.42 725.09,564.45 C727.15,564.48 729.21,564.60 731.26,564.63 C733.32,564.65 735.37,564.63 737.43,564.63 C739.49,564.63 741.54,564.59 743.60,564.63 C745.65,564.66 747.71,564.78 749.77,564.82 C751.82,564.85 753.88,564.88 755.93,564.82 C757.99,564.76 760.04,564.58 762.10,564.45 C764.16,564.33 766.21,564.14 768.27,564.07 C770.32,564.01 772.38,564.07 774.44,564.07 C776.49,564.07 778.55,564.14 780.60,564.07 C782.66,564.01 784.72,563.75 786.77,563.69 C788.83,563.63 790.88,563.59 792.94,563.69 C794.99,563.79 797.05,564.25 799.11,564.28 C801.16,564.31 803.22,563.93 805.27,563.90 C807.33,563.86 809.39,564.04 811.44,564.07 C813.50,564.10 815.55,564.07 817.61,564.07 C819.66,564.07 821.72,564.10 823.78,564.07 C825.83,564.04 827.89,563.90 829.94,563.90 C832.00,563.90 834.06,564.04 836.11,564.07 C838.17,564.10 840.22,564.04 842.28,564.07 C844.34,564.10 846.39,564.31 848.45,564.25 C850.50,564.18 852.56,563.69 854.61,563.69 C856.67,563.69 858.73,564.18 860.78,564.25 C862.84,564.31 864.89,564.07 866.95,564.07 C869.01,564.07 871.06,564.22 873.12,564.25 C875.17,564.27 877.23,564.27 879.28,564.25 C881.34,564.22 883.40,564.30 885.45,564.07 C887.51,563.84 889.56,563.63 891.62,562.88 C893.68,562.13 895.73,559.93 897.79,559.57 C899.84,559.22 901.90,560.36 903.96,560.75 C906.01,561.14 908.07,561.67 910.12,561.89 C912.18,562.11 914.23,561.89 916.29,562.08 C918.35,562.28 920.40,562.90 922.46,563.07 C924.51,563.23 926.57,563.00 928.63,563.07 C930.68,563.14 932.74,563.40 934.79,563.47 C936.85,563.53 938.91,563.47 940.96,563.47 C943.02,563.47 945.07,563.50 947.13,563.47 C949.18,563.43 951.24,563.24 953.30,563.24 C955.35,563.24 957.41,563.66 959.46,563.47 C961.52,563.27 963.58,562.15 965.63,562.08 C967.69,562.02 969.74,562.74 971.80,563.07 C973.85,563.40 975.91,564.04 977.97,564.07 C980.02,564.10 982.08,563.38 984.13,563.24 C986.19,563.10 988.25,563.17 990.30,563.24 C992.36,563.32 994.41,564.21 996.47,563.69 C998.53,563.17 1000.58,560.06 1002.64,560.13 C1004.69,560.19 1006.75,563.41 1008.80,564.07 C1010.86,564.73 1012.92,564.07 1014.97,564.07 C1017.03,564.07 1019.08,564.01 1021.14,564.07 C1023.20,564.14 1025.25,564.45 1027.31,564.45 C1029.36,564.45 1031.42,564.07 1033.47,564.07 C1035.53,564.07 1037.59,564.45 1039.64,564.45 C1041.70,564.45 1043.75,564.04 1045.81,564.07 C1047.87,564.10 1049.92,564.60 1051.98,564.63 C1054.03,564.65 1056.09,564.31 1058.15,564.25 C1060.20,564.18 1062.26,564.30 1064.31,564.25 C1066.37,564.19 1068.42,563.96 1070.48,563.90 C1072.54,563.84 1074.59,563.84 1076.65,563.90 C1078.70,563.96 1080.76,564.28 1082.82,564.25 C1084.87,564.21 1086.93,563.72 1088.98,563.69 C1091.04,563.66 1093.09,563.98 1095.15,564.07 C1097.21,564.16 1099.26,564.27 1101.32,564.25 C1103.37,564.22 1105.43,563.99 1107.49,563.90 C1109.54,563.80 1111.60,563.68 1113.65,563.67 C1115.71,563.67 1117.77,563.79 1119.82,563.88 C1121.88,563.98 1123.93,564.15 1125.99,564.25 C1128.04,564.34 1130.10,564.45 1132.16,564.45 C1134.21,564.45 1136.27,564.25 1138.32,564.25 C1140.38,564.25 1142.44,564.55 1144.49,564.45 C1146.55,564.36 1148.60,563.74 1150.66,563.67 C1152.72,563.61 1154.77,564.12 1156.83,564.05 C1158.88,563.99 1160.94,563.36 1162.99,563.26 C1165.05,563.16 1167.11,563.38 1169.16,563.45 C1171.22,563.52 1173.27,563.64 1175.33,563.67 C1177.39,563.71 1179.44,563.61 1181.50,563.67 C1183.55,563.74 1185.61,564.12 1187.66,564.05 C1189.72,563.99 1191.78,563.51 1193.83,563.26 C1195.89,563.01 1198.97,562.65 1200.00,562.53" fill="none" stroke="#52b596" stroke-width="1.25"/>
<rect x="90.5" y="534.5" width="10" height="18" rx="2" fill="#f2f2f2" stroke="#8a8a8a" stroke-width="0.5"/>
<line x1="93.5" y1="538" x2="93.5" y2="549" stroke="#444" stroke-width="1"/>
<line x1="96.5" y1="538" x2="96.5" y2="549" stroke="#444" stroke-width="1"/>
<rect x="1195.5" y="534.5" width="10" height="18" rx="2" fill="#f2f2f2" stroke="#8a8a8a" stroke-width="0.5"/>
<line x1="1198.5" y1="538" x2="1198.5" y2="549" stroke="#444" stroke-width="1"/>
<line x1="1201.5" y1="538" x2="1201.5" y2="549" stroke="#444" stroke-width="1"/>
<rect x="39.6" y="585.3" width="13.8" height="13.8" rx="1.6" fill="#7563c2"/>
<text x="64.5" y="597.8" font-size="14.4" fill="#bfbfbf" text-anchor="start" font-weight="normal" font-family='"Liberation Sans", sans-serif' >Supply-side fees</text>
<rect x="194.2" y="585.3" width="13.8" height="13.8" rx="1.6" fill="#62d6b7"/>
<text x="219.5" y="597.8" font-size="14.4" fill="#bfbfbf" text-anchor="start" font-weight="normal" font-family='"Liberation Sans", sans-serif' >Revenue</text>
<path d="M19.5,760 L19.5,642.5 Q19.5,634.5 27.5,634.5 L1204.5,634.5 Q1212.5,634.5 1212.5,642.5 L1212.5,760" fill="#1c1c1e" stroke="#2e2e32"/>
<path d="M20,688 L20,643 Q20,635 28,635 L1204,635 Q1212,635 1212,643 L1212,688 Z" fill="#232327"/>
<line x1="20" y1="688.5" x2="1212" y2="688.5" stroke="#2e2e32"/>
<text x="47.7" y="666" font-size="14.7" fill="#b9b9b9" text-anchor="start" font-weight="normal" font-family='"Liberation Sans", sans-serif' >Growth rate</text>
<text x="47.7" y="720.5" font-size="14.4" fill="#f2f2f2" text-anchor="start" font-weight="normal" font-family='"Liberation Sans", sans-serif' >Supply-side fees</text>
<text x="397.5" y="666" font-size="14.7" fill="#b9b9b9" text-anchor="end" font-weight="normal" font-family='"Liberation Sans", sans-serif' >24h</text>
<text transform="translate(398.0,721) scale(1,1.16)" x="0" y="0" font-size="13.7" fill="#22ca94" text-anchor="end" font-family='"Liberation Mono", monospace'>+8.4%</text>
<text x="555" y="666" font-size="14.7" fill="#b9b9b9" text-anchor="end" font-weight="normal" font-family='"Liberation Sans", sans-serif' >7d</text>
<text transform="translate(555.5,721) scale(1,1.16)" x="0" y="0" font-size="13.7" fill="#22ca94" text-anchor="end" font-family='"Liberation Mono", monospace'>+11.4%</text>
<text x="712" y="666" font-size="14.7" fill="#b9b9b9" text-anchor="end" font-weight="normal" font-family='"Liberation Sans", sans-serif' >30d</text>
<text transform="translate(712.5,721) scale(1,1.16)" x="0" y="0" font-size="13.7" fill="#ee5426" text-anchor="end" font-family='"Liberation Mono", monospace'>-32.2%</text>
<text x="870" y="666" font-size="14.7" fill="#b9b9b9" text-anchor="end" font-weight="normal" font-family='"Liberation Sans", sans-serif' >90d</text>
<text transform="translate(870.5,721) scale(1,1.16)" x="0" y="0" font-size="13.7" fill="#22ca94" text-anchor="end" font-family='"Liberation Mono", monospace'>+17.5%</text>
<text x="1028" y="666" font-size="14.7" fill="#b9b9b9" text-anchor="end" font-weight="normal" font-family='"Liberation Sans", sans-serif' >180d</text>
<text transform="translate(1028.5,721) scale(1,1.16)" x="0" y="0" font-size="13.7" fill="#22ca94" text-anchor="end" font-family='"Liberation Mono", monospace'>+24.9%</text>
<text x="1185" y="666" font-size="14.7" fill="#b9b9b9" text-anchor="end" font-weight="normal" font-family='"Liberation Sans", sans-serif' >365d</text>
<text transform="translate(1185.5,721) scale(1,1.16)" x="0" y="0" font-size="13.7" fill="#ee5426" text-anchor="end" font-family='"Liberation Mono", monospace'>-74.6%</text>
</svg>
</body></html>
